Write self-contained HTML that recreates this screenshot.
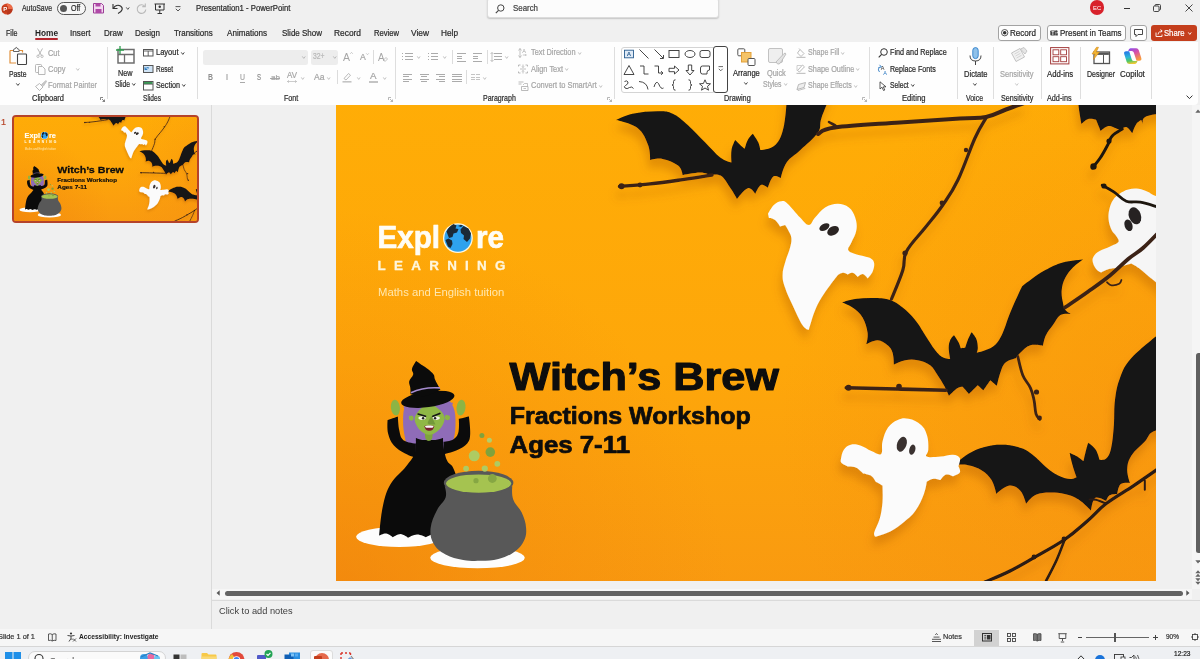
<!DOCTYPE html>
<html><head><meta charset="utf-8"><title>Presentation1 - PowerPoint</title>
<style>
*{box-sizing:border-box;margin:0;padding:0}
html,body{width:1200px;height:659px;overflow:hidden;background:#f0f0f0;font-family:"Liberation Sans",sans-serif;color:#262626}
#app{will-change:transform;position:relative;width:1200px;height:659px;overflow:hidden;background:#f0f0f0}
.abs{position:absolute}
.t{position:absolute;white-space:nowrap;font-size:8.6px;line-height:10px;color:#2b2b2b;-webkit-text-stroke:0.22px currentColor}
.g{color:#a8a8a8}
#ribbon{position:absolute;left:0;top:42px;width:1198px;height:62.8px;background:#fefefe;border-radius:0 0 4px 0}
.sep{position:absolute;top:47px;width:1px;height:52px;background:#dcdcdc}
.lbl{position:absolute;top:94px;font-size:8.4px;line-height:10px;color:#333;white-space:nowrap}
svg{position:absolute;overflow:visible}
.tab{position:absolute;top:28px;font-size:9.4px;line-height:11px;color:#2b2b2b;white-space:nowrap}
.btn{position:absolute;top:25px;height:16px;border:1px solid #8a8a8a;border-radius:3px;background:#fff}
</style></head><body><div id="app">

<!-- ============ TITLE BAR ============ -->
<div id="titlebar" class="abs" style="left:0;top:0;width:1200px;height:22px;background:#f0f0f0"></div>
<svg style="left:0.5px;top:2.5px" width="12" height="12" viewBox="0 0 12 12"><circle cx="6" cy="6" r="5.6" fill="#d24625"/><path d="M6 0.4A5.6 5.6 0 0 1 11.6 6L6 6Z" fill="#ed6c47"/><path d="M6 11.600A5.6 5.6 0 0 0 11.6 6L6 6Z" fill="#b7371c"/><rect x="1" y="3" width="6" height="6.4" rx="1" fill="#c13b1b"/><text x="2.300" y="8.300" font-family="Liberation Sans, sans-serif" font-size="6" font-weight="bold" fill="#fff">P</text></svg>
<div class="abs" style="left:57.0px;top:2.0px;width:28.5px;height:12.8px;border:1px solid #555;border-radius:7px;background:#f6f6f6"></div>
<div class="abs" style="left:60.2px;top:4.9px;width:7.0px;height:7.0px;border-radius:50%;background:#555"></div>
<svg style="left:93.0px;top:3.0px" width="11" height="10.5" viewBox="0 0 11 10.5"><path d="M0.5 0.5h8l2 2v7.500h-10z" fill="#f3d8f0" stroke="#9c3f97" stroke-width="1"/><rect x="2.500" y="0.500" width="5" height="3" fill="#b04aa8"/><rect x="2.500" y="6" width="6" height="4" fill="#b04aa8"/></svg>
<svg style="left:111.5px;top:3.0px" width="12" height="11" viewBox="0 0 12 11"><path d="M1 1v4.500h4.500" fill="none" stroke="#333" stroke-width="1.1"/><path d="M1.300 5.200C3 2.500 6 1.500 8.500 3C11.500 5 10.500 8.500 6 10.500" fill="none" stroke="#333" stroke-width="1.1"/></svg>
<svg style="left:125.5px;top:6.8px" width="3.6" height="3" viewBox="0 0 3.6 3"><path d="M0.3 0.4L1.8 2.4L3.3 0.4" fill="none" stroke="#444" stroke-width="0.9"/></svg>
<svg style="left:135.5px;top:2.5px" width="11" height="12" viewBox="0 0 11 12"><path d="M8.800 3.300A4.300 4.300 0 1 0 9.800 6.500" fill="none" stroke="#b9b9b9" stroke-width="1.100"/><path d="M6.300 3.600H9.300V0.600" fill="none" stroke="#b9b9b9" stroke-width="1.100"/></svg>
<svg style="left:154.0px;top:2.5px" width="11.5" height="12" viewBox="0 0 11.5 12"><path d="M0.500 1h10.500M1.500 1v6h8.500v-6M5.750 7v3M3.500 10.500h4.500" fill="none" stroke="#333" stroke-width="1"/><circle cx="5.750" cy="3.800" r="1.200" fill="#333"/></svg>
<svg style="left:175.0px;top:5.5px" width="6" height="6" viewBox="0 0 6 6"><path d="M0.500 0.600h5" stroke="#444" stroke-width="0.9"/><path d="M0.800 2.800L3 5L5.200 2.800" fill="none" stroke="#444" stroke-width="0.9"/></svg>
<div class="abs" style="left:487.0px;top:-2.0px;width:231.5px;height:19.5px;background:#fcfcfc;border:1px solid #dcdcdc;border-radius:3px;box-shadow:0 0.5px 1.5px rgba(0,0,0,.18)"></div>
<svg style="left:495.0px;top:3.5px" width="10" height="10" viewBox="0 0 10 10"><circle cx="5.800" cy="4" r="3.200" fill="none" stroke="#444" stroke-width="1"/><path d="M3.500 6.300L0.800 9.200" stroke="#444" stroke-width="1.100"/></svg>
<div class="abs" style="left:1089.5px;top:0.3px;width:14.5px;height:14.5px;border-radius:50%;background:#d8222b"></div>
<div class="abs" style="left:1123.5px;top:7.8px;width:6.5px;height:1.0px;background:#333"></div>
<svg style="left:1153.0px;top:4.0px" width="8" height="8" viewBox="0 0 8 8"><rect x="0.500" y="2" width="5.500" height="5.500" rx="1" fill="none" stroke="#333" stroke-width="0.9"/><path d="M2 2V1.500Q2 0.500 3 0.500H6.500Q7.500 0.500 7.500 1.500V5Q7.500 6 6.500 6H6" fill="none" stroke="#333" stroke-width="0.9"/></svg>
<svg style="left:1185.0px;top:4.0px" width="8" height="8" viewBox="0 0 8 8"><path d="M0.500 0.500L7.500 7.500M7.500 0.500L0.500 7.500" stroke="#333" stroke-width="0.9"/></svg>
<div class="t" style="left:22.0px;top:3.2px;font-size:8.3px;line-height:10.0px;color:#2b2b2b;font-weight:normal;transform-origin:0 50%;transform:scaleX(0.834)">AutoSave</div>
<div class="t" style="left:71.3px;top:3.2px;font-size:8.3px;line-height:10.0px;color:#2b2b2b;font-weight:normal;transform-origin:0 50%;transform:scaleX(0.842)">Off</div>
<div class="t" style="left:196.3px;top:3.2px;font-size:8.3px;line-height:10.0px;color:#2b2b2b;font-weight:normal;transform-origin:0 50%;transform:scaleX(0.935)">Presentation1  -  PowerPoint</div>
<div class="t" style="left:512.5px;top:3.0px;font-size:8.3px;line-height:10.0px;color:#444;font-weight:normal;transform-origin:0 50%;transform:scaleX(0.951)">Search</div>
<div class="t" style="left:1092.6px;top:3.8px;font-size:6.2px;line-height:7.4px;color:#fff;font-weight:normal;transform-origin:0 50%;transform:scaleX(0.952);-webkit-text-stroke:0">EC</div>

<!-- ============ TABS ============ -->
<div class="abs" style="left:35.0px;top:38.3px;width:22.5px;height:2.0px;background:#b3262e;border-radius:1px"></div>
<div class="abs" style="left:997.5px;top:25.0px;width:43.0px;height:15.5px;border:1px solid #a3a3a3;border-radius:3px;background:#fefefe"></div>
<svg style="left:1000.5px;top:29.3px" width="7.4" height="7.4" viewBox="0 0 7.4 7.4"><circle cx="3.700" cy="3.700" r="3.200" fill="none" stroke="#333" stroke-width="0.8"/><circle cx="3.700" cy="3.700" r="1.800" fill="#333"/></svg>
<div class="abs" style="left:1046.5px;top:25.0px;width:79.0px;height:15.5px;border:1px solid #a3a3a3;border-radius:3px;background:#fefefe"></div>
<svg style="left:1049.5px;top:29.0px" width="8" height="8" viewBox="0 0 8 8"><rect x="0.300" y="1.500" width="5" height="5" rx="0.800" fill="#444"/><circle cx="6.300" cy="2.500" r="1.300" fill="#444"/><path d="M5.300 4.200h2.500v2.300h-2.500z" fill="#444"/><text x="1.500" y="5.700" font-size="4.500" font-family="Liberation Sans, sans-serif" font-weight="bold" fill="#fff">T</text></svg>
<div class="abs" style="left:1130.0px;top:25.0px;width:16.5px;height:15.5px;border:1px solid #a3a3a3;border-radius:3px;background:#fefefe"></div>
<svg style="left:1134.0px;top:29.0px" width="9" height="8" viewBox="0 0 9 8"><path d="M0.500 0.500h8v5h-4.500l-2 2v-2h-1.500z" fill="none" stroke="#333" stroke-width="0.900" stroke-linejoin="round"/></svg>
<div class="abs" style="left:1151.0px;top:25.0px;width:45.5px;height:15.5px;border-radius:3px;background:#c43e1c"></div>
<svg style="left:1155.0px;top:28.5px" width="8" height="8" viewBox="0 0 8 8"><path d="M1 3.500v4h6v-2" fill="none" stroke="#fff" stroke-width="0.900"/><path d="M3 5.500C3.500 3 5 2 7 2M5.500 0.500L7.200 2L5.500 3.600" fill="none" stroke="#fff" stroke-width="0.900"/></svg>
<svg style="left:1188.2px;top:31.7px" width="3.6" height="3" viewBox="0 0 3.6 3"><path d="M0.3 0.4L1.8 2.4L3.3 0.4" fill="none" stroke="#fff" stroke-width="0.9"/></svg>
<div class="t" style="left:5.5px;top:27.6px;font-size:8.6px;line-height:10.3px;color:#2b2b2b;font-weight:normal;transform-origin:0 50%;transform:scaleX(0.830)">File</div>
<div class="t" style="left:34.5px;top:27.6px;font-size:8.6px;line-height:10.3px;color:#1e1e1e;font-weight:bold;transform-origin:0 50%;transform:scaleX(0.963);-webkit-text-stroke:0">Home</div>
<div class="t" style="left:69.5px;top:27.6px;font-size:8.6px;line-height:10.3px;color:#2b2b2b;font-weight:normal;transform-origin:0 50%;transform:scaleX(0.953)">Insert</div>
<div class="t" style="left:103.8px;top:27.6px;font-size:8.6px;line-height:10.3px;color:#2b2b2b;font-weight:normal;transform-origin:0 50%;transform:scaleX(0.932)">Draw</div>
<div class="t" style="left:135.0px;top:27.6px;font-size:8.6px;line-height:10.3px;color:#2b2b2b;font-weight:normal;transform-origin:0 50%;transform:scaleX(0.934)">Design</div>
<div class="t" style="left:173.8px;top:27.6px;font-size:8.6px;line-height:10.3px;color:#2b2b2b;font-weight:normal;transform-origin:0 50%;transform:scaleX(0.928)">Transitions</div>
<div class="t" style="left:227.0px;top:27.6px;font-size:8.6px;line-height:10.3px;color:#2b2b2b;font-weight:normal;transform-origin:0 50%;transform:scaleX(0.941)">Animations</div>
<div class="t" style="left:281.5px;top:27.6px;font-size:8.6px;line-height:10.3px;color:#2b2b2b;font-weight:normal;transform-origin:0 50%;transform:scaleX(0.930)">Slide Show</div>
<div class="t" style="left:334.0px;top:27.6px;font-size:8.6px;line-height:10.3px;color:#2b2b2b;font-weight:normal;transform-origin:0 50%;transform:scaleX(0.975)">Record</div>
<div class="t" style="left:374.0px;top:27.6px;font-size:8.6px;line-height:10.3px;color:#2b2b2b;font-weight:normal;transform-origin:0 50%;transform:scaleX(0.887)">Review</div>
<div class="t" style="left:411.0px;top:27.6px;font-size:8.6px;line-height:10.3px;color:#2b2b2b;font-weight:normal;transform-origin:0 50%;transform:scaleX(0.974)">View</div>
<div class="t" style="left:441.0px;top:27.6px;font-size:8.6px;line-height:10.3px;color:#2b2b2b;font-weight:normal;transform-origin:0 50%;transform:scaleX(0.961)">Help</div>
<div class="t" style="left:1010.0px;top:27.7px;font-size:8.4px;line-height:10.1px;color:#2b2b2b;font-weight:normal;transform-origin:0 50%;transform:scaleX(0.963)">Record</div>
<div class="t" style="left:1059.5px;top:27.7px;font-size:8.4px;line-height:10.1px;color:#2b2b2b;font-weight:normal;transform-origin:0 50%;transform:scaleX(0.953)">Present in Teams</div>
<div class="t" style="left:1163.5px;top:27.7px;font-size:8.4px;line-height:10.1px;color:#fff;font-weight:normal;transform-origin:0 50%;transform:scaleX(0.917)">Share</div>

<!-- ============ RIBBON ============ -->
<div id="ribbon"></div>
<div class="abs" style="left:107.0px;top:47.0px;width:1.0px;height:52.0px;background:#dedede"></div>
<div class="abs" style="left:197.0px;top:47.0px;width:1.0px;height:52.0px;background:#dedede"></div>
<div class="abs" style="left:394.5px;top:47.0px;width:1.0px;height:52.0px;background:#dedede"></div>
<div class="abs" style="left:614.3px;top:47.0px;width:1.0px;height:52.0px;background:#dedede"></div>
<div class="abs" style="left:868.8px;top:47.0px;width:1.0px;height:52.0px;background:#dedede"></div>
<div class="abs" style="left:956.6px;top:47.0px;width:1.0px;height:52.0px;background:#dedede"></div>
<div class="abs" style="left:993.2px;top:47.0px;width:1.0px;height:52.0px;background:#dedede"></div>
<div class="abs" style="left:1040.5px;top:47.0px;width:1.0px;height:52.0px;background:#dedede"></div>
<div class="abs" style="left:1079.6px;top:47.0px;width:1.0px;height:52.0px;background:#dedede"></div>
<div class="abs" style="left:1151.0px;top:47.0px;width:1.0px;height:52.0px;background:#dedede"></div>
<svg style="left:9.0px;top:47.0px" width="19" height="18" viewBox="0 0 19 18"><path d="M1 3.500h3.500M10 3.500h3.500v2" fill="none" stroke="#e0903c" stroke-width="1.200"/><path d="M1 3.500v12.500h6" fill="none" stroke="#e0903c" stroke-width="1.200"/><path d="M4.500 4.500v-1.500q0-1 1-1h0.500q0.500-1.600 1.300-1.600q0.800 0 1.300 1.600h0.500q1 0 1 1v1.500z" fill="#fff" stroke="#555" stroke-width="0.900"/><rect x="8.500" y="7" width="9" height="10.500" rx="0.800" fill="#fff" stroke="#444" stroke-width="1.100"/></svg>
<svg style="left:15.6px;top:83.0px" width="3.8" height="3" viewBox="0 0 3.8 3"><path d="M0.3 0.4L1.9 2.4L3.5 0.4" fill="none" stroke="#333" stroke-width="0.9"/></svg>
<svg style="left:36.0px;top:47.5px" width="8" height="10" viewBox="0 0 8 10"><path d="M1.500 0.500L5.500 7.500M6.500 0.500L2.500 7.500" stroke="#b0b0b0" stroke-width="0.900"/><circle cx="2" cy="8.300" r="1.200" fill="none" stroke="#b0b0b0" stroke-width="0.800"/><circle cx="6" cy="8.300" r="1.200" fill="none" stroke="#b0b0b0" stroke-width="0.800"/></svg>
<svg style="left:34.5px;top:63.5px" width="11" height="11" viewBox="0 0 11 11"><rect x="0.500" y="0.500" width="6" height="8" rx="0.800" fill="none" stroke="#b0b0b0" stroke-width="0.900"/><path d="M3.500 2.500h4l2.500 2.500v5.500h-6.500z" fill="#fdfdfd" stroke="#b0b0b0" stroke-width="0.900"/></svg>
<svg style="left:76.2px;top:68.0px" width="3.6" height="3" viewBox="0 0 3.6 3"><path d="M0.3 0.4L1.8 2.4L3.3 0.4" fill="none" stroke="#bbb" stroke-width="0.9"/></svg>
<svg style="left:34.5px;top:80.0px" width="12" height="11" viewBox="0 0 12 11"><path d="M6.500 4.500L10.500 0.800Q11.500 0.300 11.500 1.500L8.500 6z" fill="#c9c9c9" stroke="#b0b0b0" stroke-width="0.600"/><path d="M0.500 6.500L4.500 3.500L8 7L4.500 10.500z" fill="none" stroke="#b0b0b0" stroke-width="0.900"/></svg>
<svg style="left:99.5px;top:96.5px" width="5" height="5" viewBox="0 0 5 5"><path d="M0.500 3v-2.500h2.500M2 2L4.500 4.500M4.500 2.500v2h-2" fill="none" stroke="#555" stroke-width="0.700"/></svg>
<svg style="left:116.0px;top:46.0px" width="19" height="19" viewBox="0 0 19 19"><rect x="2" y="3.500" width="16" height="13.500" fill="#fff" stroke="#6d6d6d" stroke-width="1.500"/><path d="M2 8.500h16M8.500 8.500v8.500" stroke="#6d6d6d" stroke-width="1.300"/><path d="M4 0v8M0 4h8" stroke="#2f9e4f" stroke-width="1.300"/></svg>
<svg style="left:132.0px;top:82.7px" width="3.6" height="3" viewBox="0 0 3.6 3"><path d="M0.3 0.4L1.8 2.4L3.3 0.4" fill="none" stroke="#333" stroke-width="0.9"/></svg>
<svg style="left:142.5px;top:48.5px" width="10.5" height="7.5" viewBox="0 0 10.5 7.5"><rect x="0.500" y="0.500" width="9.500" height="6.500" fill="#fff" stroke="#555" stroke-width="1"/><path d="M0.500 2h9.500M5.200 2v5" stroke="#555" stroke-width="0.900"/></svg>
<svg style="left:180.7px;top:51.5px" width="3.6" height="3" viewBox="0 0 3.6 3"><path d="M0.3 0.4L1.8 2.4L3.3 0.4" fill="none" stroke="#333" stroke-width="0.9"/></svg>
<svg style="left:142.5px;top:64.5px" width="10.5" height="8" viewBox="0 0 10.5 8"><rect x="0.500" y="0.500" width="9.500" height="7" fill="#cfe3f5" stroke="#555" stroke-width="1"/><path d="M2 4.500Q3.500 1.500 6 3M2 2.200v2.300h2.300" fill="none" stroke="#1e70b8" stroke-width="0.900"/></svg>
<svg style="left:142.5px;top:80.5px" width="10.5" height="9.5" viewBox="0 0 10.5 9.5"><rect x="0.500" y="0.500" width="9.500" height="8.500" fill="#fff" stroke="#555" stroke-width="1"/><rect x="1" y="1" width="8.500" height="2" fill="#3a9a56"/><path d="M0.500 3.200h9.500" stroke="#555" stroke-width="0.800"/></svg>
<svg style="left:182.2px;top:84.1px" width="3.6" height="3" viewBox="0 0 3.6 3"><path d="M0.3 0.4L1.8 2.4L3.3 0.4" fill="none" stroke="#333" stroke-width="0.9"/></svg>
<div class="abs" style="left:202.5px;top:49.5px;width:105.0px;height:15.0px;background:#ededed;border-radius:2.500px"></div>
<svg style="left:302.2px;top:56.0px" width="3.6" height="3" viewBox="0 0 3.6 3"><path d="M0.3 0.4L1.8 2.4L3.3 0.4" fill="none" stroke="#b5b5b5" stroke-width="0.9"/></svg>
<div class="abs" style="left:310.5px;top:49.5px;width:27.5px;height:15.0px;background:#ededed;border-radius:2.500px"></div>
<svg style="left:332.7px;top:56.0px" width="3.6" height="3" viewBox="0 0 3.6 3"><path d="M0.3 0.4L1.8 2.4L3.3 0.4" fill="none" stroke="#b5b5b5" stroke-width="0.9"/></svg>
<svg style="left:350.0px;top:51.5px" width="3" height="2" viewBox="0 0 3 2"><path d="M0.200 1.800L1.500 0.400L2.800 1.800" fill="none" stroke="#aaa" stroke-width="0.600"/></svg>
<svg style="left:366.0px;top:52.5px" width="3" height="2" viewBox="0 0 3 2"><path d="M0.200 0.300L1.500 1.700L2.800 0.300" fill="none" stroke="#aaa" stroke-width="0.600"/></svg>
<div class="abs" style="left:373.0px;top:50.0px;width:1.0px;height:14.0px;background:#dcdcdc"></div>
<svg style="left:383.0px;top:57.0px" width="5" height="5" viewBox="0 0 5 5"><path d="M0.500 3L3 0.500L4.500 2L2 4.500z" fill="none" stroke="#aaa" stroke-width="0.700"/></svg>
<div class="abs" style="left:240.0px;top:82.2px;width:5.0px;height:0.7px;background:#aaa"></div>
<div class="abs" style="left:270.0px;top:77.8px;width:10.0px;height:0.7px;background:#aaa"></div>
<svg style="left:287.0px;top:79.5px" width="10" height="3" viewBox="0 0 10 3"><path d="M0.500 1.500h9M2 0.300L0.500 1.500L2 2.700M8 0.300L9.500 1.500L8 2.700" fill="none" stroke="#aaa" stroke-width="0.600"/></svg>
<svg style="left:300.8px;top:76.5px" width="3.4" height="3" viewBox="0 0 3.4 3"><path d="M0.3 0.4L1.7 2.4L3.1 0.4" fill="none" stroke="#bbb" stroke-width="0.9"/></svg>
<svg style="left:327.1px;top:76.5px" width="3.4" height="3" viewBox="0 0 3.4 3"><path d="M0.3 0.4L1.7 2.4L3.1 0.4" fill="none" stroke="#bbb" stroke-width="0.9"/></svg>
<div class="abs" style="left:337.0px;top:70.0px;width:1.0px;height:14.0px;background:#dcdcdc"></div>
<svg style="left:342.0px;top:72.0px" width="10" height="11" viewBox="0 0 10 11"><path d="M2 6.500L6.500 1.500L8.500 3.200L4 8z" fill="none" stroke="#aaa" stroke-width="0.800"/><rect x="0.500" y="9" width="9" height="1.600" fill="#c4c4c4"/></svg>
<svg style="left:357.1px;top:76.5px" width="3.4" height="3" viewBox="0 0 3.4 3"><path d="M0.3 0.4L1.7 2.4L3.1 0.4" fill="none" stroke="#bbb" stroke-width="0.9"/></svg>
<div class="abs" style="left:368.5px;top:81.3px;width:9.5px;height:1.6px;background:#c4c4c4"></div>
<svg style="left:382.8px;top:76.5px" width="3.4" height="3" viewBox="0 0 3.4 3"><path d="M0.3 0.4L1.7 2.4L3.1 0.4" fill="none" stroke="#bbb" stroke-width="0.9"/></svg>
<svg style="left:387.5px;top:96.5px" width="5" height="5" viewBox="0 0 5 5"><path d="M0.500 3v-2.500h2.500M2 2L4.500 4.500M4.500 2.500v2h-2" fill="none" stroke="#999" stroke-width="0.700"/></svg>
<div class="abs" style="left:405.0px;top:53.3px;width:7.5px;height:0.8px;background:#ababab"></div><div class="abs" style="left:402.2px;top:53.1px;width:1.200px;height:1.200px;background:#ababab"></div><div class="abs" style="left:405.0px;top:56.3px;width:7.5px;height:0.8px;background:#ababab"></div><div class="abs" style="left:402.2px;top:56.1px;width:1.200px;height:1.200px;background:#ababab"></div><div class="abs" style="left:405.0px;top:59.3px;width:7.5px;height:0.8px;background:#ababab"></div><div class="abs" style="left:402.2px;top:59.1px;width:1.200px;height:1.200px;background:#ababab"></div>
<svg style="left:417.1px;top:56.0px" width="3.4" height="3" viewBox="0 0 3.4 3"><path d="M0.3 0.4L1.7 2.4L3.1 0.4" fill="none" stroke="#bbb" stroke-width="0.9"/></svg>
<div class="abs" style="left:430.5px;top:53.3px;width:7.5px;height:0.8px;background:#ababab"></div><div class="abs" style="left:427.7px;top:53.1px;width:1.200px;height:1.200px;background:#ababab"></div><div class="abs" style="left:430.5px;top:56.3px;width:7.5px;height:0.8px;background:#ababab"></div><div class="abs" style="left:427.7px;top:56.1px;width:1.200px;height:1.200px;background:#ababab"></div><div class="abs" style="left:430.5px;top:59.3px;width:7.5px;height:0.8px;background:#ababab"></div><div class="abs" style="left:427.7px;top:59.1px;width:1.200px;height:1.200px;background:#ababab"></div>
<svg style="left:443.3px;top:56.0px" width="3.4" height="3" viewBox="0 0 3.4 3"><path d="M0.3 0.4L1.7 2.4L3.1 0.4" fill="none" stroke="#bbb" stroke-width="0.9"/></svg>
<div class="abs" style="left:451.8px;top:50.0px;width:1.0px;height:14.0px;background:#dcdcdc"></div>
<div class="abs" style="left:457.0px;top:53.0px;width:8.5px;height:0.8px;background:#ababab"></div><div class="abs" style="left:457.0px;top:55.6px;width:5.0px;height:0.8px;background:#ababab"></div><div class="abs" style="left:457.0px;top:58.2px;width:5.0px;height:0.8px;background:#ababab"></div><div class="abs" style="left:457.0px;top:60.8px;width:8.5px;height:0.8px;background:#ababab"></div>
<div class="abs" style="left:473.0px;top:53.0px;width:9.0px;height:0.8px;background:#ababab"></div><div class="abs" style="left:473.0px;top:55.6px;width:5.0px;height:0.8px;background:#ababab"></div><div class="abs" style="left:473.0px;top:58.2px;width:5.0px;height:0.8px;background:#ababab"></div><div class="abs" style="left:473.0px;top:60.8px;width:9.0px;height:0.8px;background:#ababab"></div>
<div class="abs" style="left:486.8px;top:50.0px;width:1.0px;height:14.0px;background:#dcdcdc"></div>
<div class="abs" style="left:494.0px;top:53.0px;width:7.5px;height:0.8px;background:#ababab"></div><div class="abs" style="left:494.0px;top:56.0px;width:7.5px;height:0.8px;background:#ababab"></div><div class="abs" style="left:494.0px;top:59.0px;width:7.5px;height:0.8px;background:#ababab"></div>
<svg style="left:489.5px;top:52.0px" width="4" height="10" viewBox="0 0 4 10"><path d="M2 0.500v9M0.500 2L2 0.500L3.500 2M0.500 8L2 9.500L3.500 8" fill="none" stroke="#aaa" stroke-width="0.700"/></svg>
<svg style="left:504.6px;top:56.0px" width="3.4" height="3" viewBox="0 0 3.4 3"><path d="M0.3 0.4L1.7 2.4L3.1 0.4" fill="none" stroke="#bbb" stroke-width="0.9"/></svg>
<div class="abs" style="left:403.0px;top:73.5px;width:9.0px;height:0.8px;background:#ababab"></div><div class="abs" style="left:403.0px;top:76.1px;width:6.0px;height:0.8px;background:#ababab"></div><div class="abs" style="left:403.0px;top:78.7px;width:9.0px;height:0.8px;background:#ababab"></div><div class="abs" style="left:403.0px;top:81.3px;width:6.0px;height:0.8px;background:#ababab"></div>
<div class="abs" style="left:419.5px;top:73.5px;width:9.0px;height:0.8px;background:#ababab"></div><div class="abs" style="left:421.2px;top:76.1px;width:5.5px;height:0.8px;background:#ababab"></div><div class="abs" style="left:419.5px;top:78.7px;width:9.0px;height:0.8px;background:#ababab"></div><div class="abs" style="left:421.2px;top:81.3px;width:5.5px;height:0.8px;background:#ababab"></div>
<div class="abs" style="left:435.8px;top:73.5px;width:9.0px;height:0.8px;background:#ababab"></div><div class="abs" style="left:438.8px;top:76.1px;width:6.0px;height:0.8px;background:#ababab"></div><div class="abs" style="left:435.8px;top:78.7px;width:9.0px;height:0.8px;background:#ababab"></div><div class="abs" style="left:438.8px;top:81.3px;width:6.0px;height:0.8px;background:#ababab"></div>
<div class="abs" style="left:452.0px;top:73.5px;width:9.5px;height:0.8px;background:#ababab"></div><div class="abs" style="left:452.0px;top:76.1px;width:9.5px;height:0.8px;background:#ababab"></div><div class="abs" style="left:452.0px;top:78.7px;width:9.5px;height:0.8px;background:#ababab"></div><div class="abs" style="left:452.0px;top:81.3px;width:9.5px;height:0.8px;background:#ababab"></div>
<div class="abs" style="left:465.8px;top:70.0px;width:1.0px;height:14.0px;background:#dcdcdc"></div>
<div class="abs" style="left:471.3px;top:74.0px;width:3.5px;height:0.8px;background:#c4c4c4"></div><div class="abs" style="left:471.3px;top:76.6px;width:3.5px;height:0.8px;background:#c4c4c4"></div><div class="abs" style="left:471.3px;top:79.2px;width:3.5px;height:0.8px;background:#c4c4c4"></div>
<div class="abs" style="left:476.0px;top:74.0px;width:3.5px;height:0.8px;background:#c4c4c4"></div><div class="abs" style="left:476.0px;top:76.6px;width:3.5px;height:0.8px;background:#c4c4c4"></div><div class="abs" style="left:476.0px;top:79.2px;width:3.5px;height:0.8px;background:#c4c4c4"></div>
<svg style="left:483.3px;top:76.5px" width="3.4" height="3" viewBox="0 0 3.4 3"><path d="M0.3 0.4L1.7 2.4L3.1 0.4" fill="none" stroke="#bbb" stroke-width="0.9"/></svg>
<svg style="left:518.0px;top:47.5px" width="9" height="10" viewBox="0 0 9 10"><path d="M2 0.500v9M0.500 7.500L2 9.500L3.500 7.500M0.500 2.500L2 0.500L3.500 2.500" fill="none" stroke="#aaa" stroke-width="0.700"/><text x="4.300" y="5" font-size="5.500" font-family="Liberation Sans, sans-serif" fill="#aaa">A</text><path d="M4.800 7h3.500l-1-1M8.300 7l-1 1" fill="none" stroke="#aaa" stroke-width="0.600"/></svg>
<svg style="left:577.8px;top:51.5px" width="3.4" height="3" viewBox="0 0 3.4 3"><path d="M0.3 0.4L1.7 2.4L3.1 0.4" fill="none" stroke="#bbb" stroke-width="0.9"/></svg>
<svg style="left:517.5px;top:64.0px" width="10" height="10" viewBox="0 0 10 10"><path d="M0.500 2.500v-1.500h2M9.500 2.500v-1.500h-2M0.500 7.500v1.500h2M9.500 7.500v1.500h-2" fill="none" stroke="#aaa" stroke-width="0.800"/><path d="M2 5h6M5 0.500v3M5 6.500v3M4 2.500L5 3.500L6 2.500M4 7.500L5 6.500L6 7.500" fill="none" stroke="#aaa" stroke-width="0.700"/></svg>
<svg style="left:565.3px;top:68.0px" width="3.4" height="3" viewBox="0 0 3.4 3"><path d="M0.3 0.4L1.7 2.4L3.1 0.4" fill="none" stroke="#bbb" stroke-width="0.9"/></svg>
<svg style="left:517.5px;top:80.5px" width="10.5" height="10" viewBox="0 0 10.5 10"><path d="M0.500 1h5M0.500 3h3" stroke="#aaa" stroke-width="0.800"/><path d="M3.500 5.500h6.500v4h-6.500z" fill="none" stroke="#aaa" stroke-width="0.800"/><path d="M5 4l1.500-1.500h3v3" fill="none" stroke="#aaa" stroke-width="0.700"/><path d="M5.500 7.500h2.500" stroke="#aaa" stroke-width="0.700"/></svg>
<svg style="left:599.3px;top:84.5px" width="3.4" height="3" viewBox="0 0 3.4 3"><path d="M0.3 0.4L1.7 2.4L3.1 0.4" fill="none" stroke="#bbb" stroke-width="0.9"/></svg>
<svg style="left:607.0px;top:96.5px" width="5" height="5" viewBox="0 0 5 5"><path d="M0.500 3v-2.500h2.500M2 2L4.500 4.500M4.500 2.500v2h-2" fill="none" stroke="#999" stroke-width="0.700"/></svg>
<div class="abs" style="left:620.5px;top:47.0px;width:93.0px;height:45.5px;border:1px solid #d4d4d4;border-radius:3px 0 0 3px;background:#fff"></div>
<div class="abs" style="left:713.0px;top:45.5px;width:14.5px;height:47.5px;border:1px solid #444;border-radius:3px;background:#fff"></div>
<svg style="left:717.5px;top:65.5px" width="5.5" height="6" viewBox="0 0 5.5 6"><path d="M0.500 0.600h4.500" stroke="#444" stroke-width="0.800"/><path d="M0.800 2.800L2.750 4.800L4.700 2.800" fill="none" stroke="#444" stroke-width="0.800"/></svg>
<svg style="left:622.8px;top:47.8px" width="12" height="12" viewBox="0 0 12 12"><rect x="1.500" y="2.200" width="9" height="7.600" fill="#dfeaf6" stroke="#2a5d8f" stroke-width="0.900"/><text x="3.800" y="8.300" font-size="6" font-weight="bold" font-family="Liberation Sans, sans-serif" fill="#2a5d8f">A</text></svg>
<svg style="left:637.8px;top:47.8px" width="12" height="12" viewBox="0 0 12 12"><path d="M1.500 1.500L10.500 10.500" fill="none" stroke="#333" stroke-width="0.9"/></svg>
<svg style="left:653.3px;top:47.8px" width="12" height="12" viewBox="0 0 12 12"><path d="M1.500 1.500L10 10M10.500 7v3.500h-3.500" fill="none" stroke="#333" stroke-width="0.9"/></svg>
<svg style="left:668.3px;top:47.8px" width="12" height="12" viewBox="0 0 12 12"><rect x="1" y="2.500" width="10" height="7" fill="none" stroke="#333" stroke-width="0.9"/></svg>
<svg style="left:683.5px;top:47.8px" width="12" height="12" viewBox="0 0 12 12"><ellipse cx="6" cy="6" rx="5" ry="3.500" fill="none" stroke="#333" stroke-width="0.9"/></svg>
<svg style="left:698.5px;top:47.8px" width="12" height="12" viewBox="0 0 12 12"><rect x="1" y="2.500" width="10" height="7" rx="2" fill="none" stroke="#333" stroke-width="0.9"/></svg>
<svg style="left:622.8px;top:63.5px" width="12" height="12" viewBox="0 0 12 12"><path d="M6 1.500L11 10.500H1z" fill="none" stroke="#333" stroke-width="0.9" stroke-linejoin="round"/></svg>
<svg style="left:637.8px;top:63.5px" width="12" height="12" viewBox="0 0 12 12"><path d="M2 2h4v8h4.500" fill="none" stroke="#333" stroke-width="0.9"/></svg>
<svg style="left:653.3px;top:63.5px" width="12" height="12" viewBox="0 0 12 12"><path d="M1.500 2h4v7h4M8 7.200L10 9L8 10.800" fill="none" stroke="#333" stroke-width="0.9"/></svg>
<svg style="left:668.3px;top:63.5px" width="12" height="12" viewBox="0 0 12 12"><path d="M1 4.300h5.500v-2.300L11 6L6.500 10v-2.300H1z" fill="none" stroke="#333" stroke-width="0.9" stroke-linejoin="round"/></svg>
<svg style="left:683.5px;top:63.5px" width="12" height="12" viewBox="0 0 12 12"><path d="M4.300 1h3.400v5.500h2.300L6 11L2 6.500h2.300z" fill="none" stroke="#333" stroke-width="0.9" stroke-linejoin="round"/></svg>
<svg style="left:698.5px;top:63.5px" width="12" height="12" viewBox="0 0 12 12"><path d="M1.500 4Q1.500 2 3.500 2H10.500V6Q8 6 8 8.500V10H3.500Q1.500 10 1.500 8z" fill="none" stroke="#333" stroke-width="0.9" stroke-linejoin="round"/></svg>
<svg style="left:622.8px;top:78.5px" width="12" height="12" viewBox="0 0 12 12"><path d="M1.500 2.500Q4 1 5 3Q5.500 5 2.500 6.500Q0.500 7.500 2 9Q4 10.500 6.500 8.500Q9 7 10.500 9.500" fill="none" stroke="#333" stroke-width="0.9"/></svg>
<svg style="left:637.8px;top:78.5px" width="12" height="12" viewBox="0 0 12 12"><path d="M1 2.500Q9 3 10 10.500" fill="none" stroke="#333" stroke-width="0.9"/></svg>
<svg style="left:653.3px;top:78.5px" width="12" height="12" viewBox="0 0 12 12"><path d="M1 8Q3 1 5.500 4.500Q8 11 10.500 9" fill="none" stroke="#333" stroke-width="0.9"/></svg>
<svg style="left:668.3px;top:78.5px" width="12" height="12" viewBox="0 0 12 12"><path d="M7.500 0.800Q5.500 0.800 5.500 2.500V4.500Q5.500 6 4 6Q5.500 6 5.500 7.500V9.500Q5.500 11.200 7.500 11.200" fill="none" stroke="#333" stroke-width="0.9"/></svg>
<svg style="left:683.5px;top:78.5px" width="12" height="12" viewBox="0 0 12 12"><path d="M4.500 0.800Q6.500 0.800 6.500 2.500V4.500Q6.500 6 8 6Q6.500 6 6.500 7.500V9.500Q6.500 11.200 4.500 11.200" fill="none" stroke="#333" stroke-width="0.9"/></svg>
<svg style="left:698.5px;top:78.5px" width="12" height="12" viewBox="0 0 12 12"><path d="M6 0.800L7.600 4.500L11.500 4.800L8.500 7.300L9.500 11.200L6 9L2.500 11.200L3.500 7.300L0.500 4.800L4.400 4.500z" fill="none" stroke="#333" stroke-width="0.9" stroke-linejoin="round"/></svg>
<svg style="left:737.0px;top:47.5px" width="19" height="18" viewBox="0 0 19 18"><rect x="0.800" y="0.800" width="7" height="7" rx="1" fill="#fff" stroke="#555" stroke-width="1"/><rect x="4.500" y="4.500" width="9.500" height="9.500" fill="#f5c469" stroke="#e3a13a" stroke-width="1"/><rect x="11" y="10.500" width="7" height="7" rx="1" fill="#fff" stroke="#555" stroke-width="1"/></svg>
<svg style="left:743.6px;top:81.8px" width="3.8" height="3" viewBox="0 0 3.8 3"><path d="M0.3 0.4L1.9 2.4L3.5 0.4" fill="none" stroke="#333" stroke-width="0.9"/></svg>
<svg style="left:767.5px;top:47.5px" width="19" height="18" viewBox="0 0 19 18"><rect x="0.500" y="0.500" width="14" height="14" rx="1.500" fill="#efefef" stroke="#c2c2c2" stroke-width="1"/><path d="M8 14L16 5.500Q17.500 4.500 18 6L12 15.500Q9.500 17.500 8 14z" fill="#e3e3e3" stroke="#b5b5b5" stroke-width="0.800"/></svg>
<svg style="left:784.3px;top:82.9px" width="3.4" height="3" viewBox="0 0 3.4 3"><path d="M0.3 0.4L1.7 2.4L3.1 0.4" fill="none" stroke="#bbb" stroke-width="0.9"/></svg>
<svg style="left:795.5px;top:47.5px" width="10" height="10" viewBox="0 0 10 10"><path d="M4 1.500L8 5.500L5 8.500L1.500 5z" fill="none" stroke="#aaa" stroke-width="0.800"/><path d="M4 1.500L3 0.500" stroke="#aaa" stroke-width="0.800"/><rect x="0.500" y="8.800" width="9" height="1.200" fill="#c4c4c4"/></svg>
<svg style="left:841.3px;top:51.5px" width="3.4" height="3" viewBox="0 0 3.4 3"><path d="M0.3 0.4L1.7 2.4L3.1 0.4" fill="none" stroke="#bbb" stroke-width="0.9"/></svg>
<svg style="left:795.5px;top:64.0px" width="10" height="10" viewBox="0 0 10 10"><path d="M1.500 6.500L6.500 1L8.500 2.800L3.500 8z" fill="none" stroke="#aaa" stroke-width="0.800"/><rect x="0.500" y="8.800" width="9" height="1.200" fill="#c4c4c4"/><path d="M1 1.500h4.500M1 1.500v5" stroke="#bbb" stroke-width="0.700" fill="none"/></svg>
<svg style="left:856.3px;top:68.0px" width="3.4" height="3" viewBox="0 0 3.4 3"><path d="M0.3 0.4L1.7 2.4L3.1 0.4" fill="none" stroke="#bbb" stroke-width="0.9"/></svg>
<svg style="left:795.5px;top:80.5px" width="10.5" height="10" viewBox="0 0 10.5 10"><path d="M2.500 3.500L9.500 1.500L8 6.500L1 8.500z" fill="#eee" stroke="#aaa" stroke-width="0.800"/><path d="M1 8.500L2 9.500L9 7.500L8 6.500" fill="none" stroke="#aaa" stroke-width="0.700"/></svg>
<svg style="left:854.1px;top:84.5px" width="3.4" height="3" viewBox="0 0 3.4 3"><path d="M0.3 0.4L1.7 2.4L3.1 0.4" fill="none" stroke="#bbb" stroke-width="0.9"/></svg>
<svg style="left:862.0px;top:96.5px" width="5" height="5" viewBox="0 0 5 5"><path d="M0.500 3v-2.500h2.500M2 2L4.500 4.500M4.500 2.500v2h-2" fill="none" stroke="#999" stroke-width="0.700"/></svg>
<svg style="left:877.5px;top:47.5px" width="10" height="10" viewBox="0 0 10 10"><circle cx="6" cy="4" r="3.300" fill="none" stroke="#333" stroke-width="1"/><path d="M3.600 6.400L0.700 9.400" stroke="#333" stroke-width="1.100"/></svg>
<svg style="left:877.0px;top:63.5px" width="11" height="11" viewBox="0 0 11 11"><path d="M2 3.500Q0.500 6 2.500 8M2.500 0.800L4.500 3L1.500 3.500" fill="none" stroke="#2b78c2" stroke-width="0.900"/><text x="3.800" y="6" font-size="5.500" font-family="Liberation Sans, sans-serif" fill="#333">A</text><text x="6.300" y="10.500" font-size="5.500" font-family="Liberation Sans, sans-serif" fill="#2b78c2">A</text></svg>
<svg style="left:878.5px;top:80.5px" width="8" height="10" viewBox="0 0 8 10"><path d="M1 0.800V8L3 6.200L4.500 9.500L5.800 9L4.300 5.800H7z" fill="#fff" stroke="#333" stroke-width="0.800" stroke-linejoin="round"/></svg>
<svg style="left:911.0px;top:84.3px" width="3.6" height="3" viewBox="0 0 3.6 3"><path d="M0.3 0.4L1.8 2.4L3.3 0.4" fill="none" stroke="#333" stroke-width="0.9"/></svg>
<svg style="left:968.5px;top:46.5px" width="13" height="19" viewBox="0 0 13 19"><rect x="3.800" y="0.600" width="5.400" height="11" rx="2.700" fill="#8fc1ea" stroke="#2f7fca" stroke-width="0.900"/><path d="M1 8.500Q1 14 6.500 14Q12 14 12 8.500M6.500 14v4" fill="none" stroke="#444" stroke-width="1"/></svg>
<svg style="left:973.1px;top:82.8px" width="3.8" height="3" viewBox="0 0 3.8 3"><path d="M0.3 0.4L1.9 2.4L3.5 0.4" fill="none" stroke="#333" stroke-width="0.9"/></svg>
<svg style="left:1009.5px;top:47.0px" width="18" height="18" viewBox="0 0 18 18"><path d="M1.500 6L10 1.500L14.500 10L6 14.500z" fill="#f1f1f1" stroke="#bdbdbd" stroke-width="0.900"/><path d="M4.500 7L9.500 4.300M5.500 9L10.500 6.300M6.500 11L11.500 8.300" stroke="#c9c9c9" stroke-width="0.700"/><path d="M10.500 2L14 0.500L17 4L15 7z" fill="#e6e6e6" stroke="#bdbdbd" stroke-width="0.800"/></svg>
<svg style="left:1014.8px;top:82.5px" width="3.6" height="3" viewBox="0 0 3.6 3"><path d="M0.3 0.4L1.8 2.4L3.3 0.4" fill="none" stroke="#c4c4c4" stroke-width="0.9"/></svg>
<svg style="left:1050.0px;top:47.3px" width="19.5" height="17.5" viewBox="0 0 19.5 17.5"><rect x="0.600" y="0.600" width="18.300" height="16.300" fill="#fff" stroke="#a33b3b" stroke-width="1"/><rect x="3" y="2.800" width="5.800" height="5" fill="none" stroke="#a33b3b" stroke-width="0.900"/><rect x="10.700" y="2.800" width="5.800" height="5" fill="none" stroke="#a33b3b" stroke-width="0.900"/><rect x="3" y="9.700" width="5.800" height="5" fill="none" stroke="#a33b3b" stroke-width="0.900"/><rect x="10.700" y="9.700" width="5.800" height="5" fill="none" stroke="#a33b3b" stroke-width="0.900"/></svg>
<svg style="left:1091.0px;top:46.5px" width="19.5" height="18.5" viewBox="0 0 19.5 18.5"><rect x="3" y="5" width="15.500" height="11.500" fill="#fff" stroke="#555" stroke-width="1.300"/><rect x="3.600" y="5.600" width="14.300" height="2.300" fill="#555"/><path d="M12.500 8v8" stroke="#555" stroke-width="1"/><path d="M5.500 0.300L1 7h3l-1.500 5.500L8.500 5h-3.300L7.500 0.300z" fill="#f2b431" stroke="#d48a1c" stroke-width="0.600" stroke-linejoin="round"/></svg>
<svg style="left:1123.0px;top:46.5px" width="19.5" height="18.5" viewBox="0 0 19.5 18.5"><defs><linearGradient id="cp1" x1="0" y1="0" x2="0.6" y2="1"><stop offset="0" stop-color="#7d4df5"/><stop offset="0.500" stop-color="#d84fa8"/><stop offset="1" stop-color="#f79a3e"/></linearGradient><linearGradient id="cp2" x1="0.300" y1="0" x2="0.500" y2="1"><stop offset="0" stop-color="#2576e8"/><stop offset="0.450" stop-color="#2bb6d8"/><stop offset="0.750" stop-color="#52c760"/><stop offset="1" stop-color="#f2c935"/></linearGradient></defs><path d="M7.500 1.200H13.200Q15.200 1.200 15.800 3.200L18.300 11Q19 13.800 16.300 13.800H13.500L10.800 5.500Q10.300 4 8.800 4H5.200Q5.800 1.400 7.500 1.200z" fill="url(#cp1)"/><path d="M12.200 17H6.300Q4.300 17 3.700 15L1.200 7Q0.500 4.200 3.200 4.200H6.200L8.800 12.500Q9.300 14 10.800 14H14.500Q13.900 16.700 12.200 17z" fill="url(#cp2)"/></svg>
<svg style="left:1185.5px;top:94.5px" width="7" height="4.5" viewBox="0 0 7 4.5"><path d="M0.600 0.600L3.500 3.600L6.400 0.600" fill="none" stroke="#333" stroke-width="1"/></svg>
<div class="t" style="left:9.0px;top:69.3px;font-size:8.4px;line-height:10.1px;color:#2b2b2b;font-weight:normal;transform-origin:0 50%;transform:scaleX(0.817)">Paste</div>
<div class="t" style="left:47.5px;top:47.6px;font-size:8.3px;line-height:10.0px;color:#a6a6a6;font-weight:normal;transform-origin:0 50%;transform:scaleX(0.890)">Cut</div>
<div class="t" style="left:47.5px;top:64.1px;font-size:8.3px;line-height:10.0px;color:#a6a6a6;font-weight:normal;transform-origin:0 50%;transform:scaleX(0.903)">Copy</div>
<div class="t" style="left:47.5px;top:80.4px;font-size:8.3px;line-height:10.0px;color:#a6a6a6;font-weight:normal;transform-origin:0 50%;transform:scaleX(0.893)">Format Painter</div>
<div class="t" style="left:32.0px;top:94.4px;font-size:8.2px;line-height:9.8px;color:#2e2e2e;font-weight:normal;transform-origin:0 50%;transform:scaleX(0.913)">Clipboard</div>
<div class="t" style="left:118.0px;top:68.0px;font-size:8.4px;line-height:10.1px;color:#2b2b2b;font-weight:normal;transform-origin:0 50%;transform:scaleX(0.865)">New</div>
<div class="t" style="left:114.5px;top:78.6px;font-size:8.4px;line-height:10.1px;color:#2b2b2b;font-weight:normal;transform-origin:0 50%;transform:scaleX(0.805)">Slide</div>
<div class="t" style="left:155.5px;top:47.4px;font-size:8.3px;line-height:10.0px;color:#2b2b2b;font-weight:normal;transform-origin:0 50%;transform:scaleX(0.903)">Layout</div>
<div class="t" style="left:155.5px;top:63.6px;font-size:8.3px;line-height:10.0px;color:#2b2b2b;font-weight:normal;transform-origin:0 50%;transform:scaleX(0.784)">Reset</div>
<div class="t" style="left:155.5px;top:80.0px;font-size:8.3px;line-height:10.0px;color:#2b2b2b;font-weight:normal;transform-origin:0 50%;transform:scaleX(0.867)">Section</div>
<div class="t" style="left:143.0px;top:94.4px;font-size:8.2px;line-height:9.8px;color:#2e2e2e;font-weight:normal;transform-origin:0 50%;transform:scaleX(0.807)">Slides</div>
<div class="t" style="left:312.5px;top:52.2px;font-size:8.2px;line-height:9.8px;color:#b9b9b9;font-weight:normal;transform-origin:0 50%;transform:scaleX(0.828)">32+</div>
<div class="t" style="left:343.0px;top:50.7px;font-size:10.5px;line-height:12.6px;color:#a6a6a6;font-weight:normal;transform-origin:0 50%;transform:scaleX(0.998);-webkit-text-stroke:0">A</div>
<div class="t" style="left:360.0px;top:52.2px;font-size:9px;line-height:10.8px;color:#a6a6a6;font-weight:normal;transform-origin:0 50%;transform:scaleX(0.964)">A</div>
<div class="t" style="left:377.5px;top:50.7px;font-size:10.5px;line-height:12.6px;color:#a6a6a6;font-weight:normal;transform-origin:0 50%;transform:scaleX(0.927);-webkit-text-stroke:0">A</div>
<div class="t" style="left:207.5px;top:72.1px;font-size:8.6px;line-height:10.3px;color:#8e8e8e;font-weight:bold;transform-origin:0 50%;transform:scaleX(0.804);-webkit-text-stroke:0">B</div>
<div class="t" style="left:225.5px;top:72.1px;font-size:8.6px;line-height:10.3px;color:#9a9a9a;font-weight:normal;transform-origin:0 50%;transform:scaleX(0.837)">I</div>
<div class="t" style="left:240.0px;top:71.9px;font-size:8.6px;line-height:10.3px;color:#a6a6a6;font-weight:normal;transform-origin:0 50%;transform:scaleX(0.804)">U</div>
<div class="t" style="left:256.5px;top:72.1px;font-size:8.6px;line-height:10.3px;color:#8e8e8e;font-weight:normal;transform-origin:0 50%;transform:scaleX(0.698)">S</div>
<div class="t" style="left:270.5px;top:72.9px;font-size:7.6px;line-height:9.1px;color:#a6a6a6;font-weight:normal;transform-origin:0 50%;transform:scaleX(1.065)">ab</div>
<div class="t" style="left:287.0px;top:71.2px;font-size:8.2px;line-height:9.8px;color:#a6a6a6;font-weight:normal;transform-origin:0 50%;transform:scaleX(0.968)">AV</div>
<div class="t" style="left:313.5px;top:72.1px;font-size:8.6px;line-height:10.3px;color:#a6a6a6;font-weight:normal;transform-origin:0 50%;transform:scaleX(0.999)">Aa</div>
<div class="t" style="left:370.0px;top:70.7px;font-size:9px;line-height:10.8px;color:#a6a6a6;font-weight:normal;transform-origin:0 50%;transform:scaleX(1.081)">A</div>
<div class="t" style="left:283.8px;top:94.4px;font-size:8.2px;line-height:9.8px;color:#2e2e2e;font-weight:normal;transform-origin:0 50%;transform:scaleX(0.866)">Font</div>
<div class="t" style="left:530.5px;top:47.4px;font-size:8.3px;line-height:10.0px;color:#a6a6a6;font-weight:normal;transform-origin:0 50%;transform:scaleX(0.885)">Text Direction</div>
<div class="t" style="left:530.5px;top:63.8px;font-size:8.3px;line-height:10.0px;color:#a6a6a6;font-weight:normal;transform-origin:0 50%;transform:scaleX(0.893)">Align Text</div>
<div class="t" style="left:530.5px;top:80.4px;font-size:8.3px;line-height:10.0px;color:#a6a6a6;font-weight:normal;transform-origin:0 50%;transform:scaleX(0.898)">Convert to SmartArt</div>
<div class="t" style="left:483.0px;top:94.4px;font-size:8.2px;line-height:9.8px;color:#2e2e2e;font-weight:normal;transform-origin:0 50%;transform:scaleX(0.858)">Paragraph</div>
<div class="t" style="left:732.5px;top:68.1px;font-size:8.4px;line-height:10.1px;color:#2b2b2b;font-weight:normal;transform-origin:0 50%;transform:scaleX(0.899)">Arrange</div>
<div class="t" style="left:767.0px;top:68.1px;font-size:8.4px;line-height:10.1px;color:#a6a6a6;font-weight:normal;transform-origin:0 50%;transform:scaleX(0.878)">Quick</div>
<div class="t" style="left:763.0px;top:78.8px;font-size:8.4px;line-height:10.1px;color:#a6a6a6;font-weight:normal;transform-origin:0 50%;transform:scaleX(0.811)">Styles</div>
<div class="t" style="left:807.5px;top:47.4px;font-size:8.3px;line-height:10.0px;color:#a6a6a6;font-weight:normal;transform-origin:0 50%;transform:scaleX(0.848)">Shape Fill</div>
<div class="t" style="left:807.5px;top:63.8px;font-size:8.3px;line-height:10.0px;color:#a6a6a6;font-weight:normal;transform-origin:0 50%;transform:scaleX(0.880)">Shape Outline</div>
<div class="t" style="left:807.5px;top:80.4px;font-size:8.3px;line-height:10.0px;color:#a6a6a6;font-weight:normal;transform-origin:0 50%;transform:scaleX(0.850)">Shape Effects</div>
<div class="t" style="left:723.8px;top:94.4px;font-size:8.2px;line-height:9.8px;color:#2e2e2e;font-weight:normal;transform-origin:0 50%;transform:scaleX(0.889)">Drawing</div>
<div class="t" style="left:889.8px;top:47.3px;font-size:8.3px;line-height:10.0px;color:#2b2b2b;font-weight:normal;transform-origin:0 50%;transform:scaleX(0.872)">Find and Replace</div>
<div class="t" style="left:889.8px;top:63.8px;font-size:8.3px;line-height:10.0px;color:#2b2b2b;font-weight:normal;transform-origin:0 50%;transform:scaleX(0.854)">Replace Fonts</div>
<div class="t" style="left:889.8px;top:80.2px;font-size:8.3px;line-height:10.0px;color:#2b2b2b;font-weight:normal;transform-origin:0 50%;transform:scaleX(0.811)">Select</div>
<div class="t" style="left:901.6px;top:94.4px;font-size:8.2px;line-height:9.8px;color:#2e2e2e;font-weight:normal;transform-origin:0 50%;transform:scaleX(0.934)">Editing</div>
<div class="t" style="left:963.5px;top:69.0px;font-size:8.4px;line-height:10.1px;color:#2b2b2b;font-weight:normal;transform-origin:0 50%;transform:scaleX(0.901)">Dictate</div>
<div class="t" style="left:966.3px;top:94.4px;font-size:8.2px;line-height:9.8px;color:#2e2e2e;font-weight:normal;transform-origin:0 50%;transform:scaleX(0.849)">Voice</div>
<div class="t" style="left:1000.0px;top:69.0px;font-size:8.4px;line-height:10.1px;color:#a6a6a6;font-weight:normal;transform-origin:0 50%;transform:scaleX(0.891)">Sensitivity</div>
<div class="t" style="left:1000.6px;top:94.4px;font-size:8.2px;line-height:9.8px;color:#2e2e2e;font-weight:normal;transform-origin:0 50%;transform:scaleX(0.874)">Sensitivity</div>
<div class="t" style="left:1046.8px;top:69.0px;font-size:8.4px;line-height:10.1px;color:#2b2b2b;font-weight:normal;transform-origin:0 50%;transform:scaleX(0.922)">Add-ins</div>
<div class="t" style="left:1047.4px;top:94.4px;font-size:8.2px;line-height:9.8px;color:#2e2e2e;font-weight:normal;transform-origin:0 50%;transform:scaleX(0.886)">Add-ins</div>
<div class="t" style="left:1086.7px;top:69.0px;font-size:8.4px;line-height:10.1px;color:#2b2b2b;font-weight:normal;transform-origin:0 50%;transform:scaleX(0.838)">Designer</div>
<div class="t" style="left:1119.7px;top:69.0px;font-size:8.4px;line-height:10.1px;color:#2b2b2b;font-weight:normal;transform-origin:0 50%;transform:scaleX(0.951)">Copilot</div>

<!-- ============ LEFT PANE ============ -->
<div class="abs" style="left:0;top:105px;width:212px;height:523px;background:#f0f0f0"></div>
<div class="abs" style="left:211px;top:105px;width:1px;height:524px;background:#dadada"></div>
<div class="t" style="left:1px;top:117px;color:#b7472a;font-size:9px">1</div>
<div class="abs" style="left:12px;top:115px;width:187px;height:108px;border:2px solid #b5432a;border-radius:4px;background:#f99d0f;overflow:hidden">
<svg style="left:0;top:0" width="183" height="104" viewBox="334.5 164 740 418" preserveAspectRatio="none"><use href="#slideart"/></svg>
</div>

<!-- ============ MAIN SLIDE ============ -->
<div class="abs" style="left:336px;top:105px;width:820px;height:476px;overflow:hidden;background:#fa9f0e">
<svg style="left:-336px;top:-105px" width="1200" height="659" viewBox="0 0 1200 659">
<defs>
<linearGradient id="bg1" x1="0" y1="0" x2="0" y2="1"><stop offset="0" stop-color="#ffad06"/><stop offset="0.55" stop-color="#fea70a"/><stop offset="1" stop-color="#f99a10"/></linearGradient>
<radialGradient id="bg2" gradientUnits="userSpaceOnUse" cx="330" cy="610" r="400"><stop offset="0" stop-color="#ee7d0b" stop-opacity="0.62"/><stop offset="0.45" stop-color="#f0820c" stop-opacity="0.32"/><stop offset="1" stop-color="#f0820c" stop-opacity="0"/></radialGradient>
<radialGradient id="bg3" gradientUnits="userSpaceOnUse" cx="1160" cy="420" r="380"><stop offset="0" stop-color="#f48c10" stop-opacity="0.45"/><stop offset="1" stop-color="#f48c10" stop-opacity="0"/></radialGradient>
<filter id="sh" filterUnits="userSpaceOnUse" x="300" y="60" width="900" height="560"><feDropShadow dx="-2" dy="9" stdDeviation="4.5" flood-color="#a85200" flood-opacity="0.32"/></filter>
<g id="slideart">
<rect x="330" y="90" width="830" height="495" fill="url(#bg1)"/>
<rect x="330" y="90" width="830" height="495" fill="url(#bg2)"/>
<rect x="330" y="90" width="830" height="495" fill="url(#bg3)"/>
<g filter="url(#sh)"><path d="M616.3 120.0C616.3 120.0 624.6 115.5 632.6 113.8C640.5 112.1 649.9 111.3 657.6 111.3C665.3 111.3 666.8 111.1 672.6 113.8C678.4 116.4 681.4 119.5 687.7 125.0C693.9 130.6 698.9 136.3 705.2 142.6C711.4 148.8 715.2 153.7 720.2 157.6C725.3 161.5 731.5 162.6 731.5 162.6C731.5 162.6 730.8 154.4 731.5 150.1C732.2 145.8 735.2 140.1 735.2 140.1C735.2 140.1 739.7 144.6 741.5 146.3C743.3 148.0 744.8 148.8 744.8 148.8C744.8 148.8 746.2 143.0 747.8 140.1C749.3 137.2 752.8 133.8 752.8 133.8C752.8 133.8 756.8 139.4 758.3 142.6C759.7 145.7 760.3 150.1 760.3 150.1C760.3 150.1 770.7 149.9 775.3 145.1C779.9 140.3 781.8 135.6 784.1 125.0C786.4 114.4 787.3 90.0 787.3 90.0C787.3 90.0 832.9 90.0 832.9 90.0C832.9 90.0 824.5 109.3 821.6 117.5C818.7 125.7 822.0 126.3 817.9 132.6C813.8 138.8 806.4 144.3 800.4 150.1C794.3 155.9 790.3 157.2 786.6 162.6C782.8 168.0 780.8 178.1 780.8 178.1C780.8 178.1 775.8 174.6 773.3 176.4C770.8 178.2 767.8 187.7 767.8 187.7C767.8 187.7 763.2 183.9 760.8 185.1C758.4 186.4 755.3 193.9 755.3 193.9C755.3 193.9 751.3 187.2 747.8 188.2C744.2 189.1 737.0 198.9 737.0 198.9C737.0 198.9 733.4 192.1 730.2 187.7C727.1 183.2 724.6 178.0 720.7 175.6C716.9 173.2 710.2 175.1 710.2 175.1C710.2 175.1 705.5 172.6 700.2 172.6C694.9 172.6 682.6 175.1 682.6 175.1C682.6 175.1 682.0 168.7 678.1 165.6C674.3 162.5 668.0 159.9 662.6 158.9C657.2 157.8 650.1 160.1 650.1 160.1C650.1 160.1 650.5 151.2 648.1 145.1C645.7 138.9 643.7 132.9 637.6 128.0C631.4 123.2 616.3 120.0 616.3 120.0Z" fill="#141414"/>
<path d="M842.0 302.6C842.0 302.6 848.7 300.0 855.0 299.1C861.4 298.2 868.3 297.9 875.1 298.1C881.8 298.3 884.8 298.3 890.1 300.1C895.4 301.9 897.8 303.8 902.6 307.6C907.4 311.5 910.8 314.8 915.1 320.1C919.5 325.4 921.3 329.4 925.2 335.2C929.0 340.9 931.8 346.0 935.2 350.2C938.6 354.4 939.8 355.5 942.7 357.2C945.6 358.9 950.2 359.0 950.2 359.0C950.2 359.0 948.7 351.3 948.7 347.7C948.7 344.1 949.2 342.6 950.2 340.2C951.2 337.8 954.0 335.2 954.0 335.2C954.0 335.2 957.2 339.7 958.5 342.2C959.8 344.7 960.7 348.2 960.7 348.2C960.7 348.2 965.2 347.7 965.2 347.7C965.2 347.7 966.5 343.2 967.7 340.2C968.9 337.2 971.5 332.2 971.5 332.2C971.5 332.2 975.1 335.9 976.3 338.9C977.5 341.9 977.7 345.0 977.8 347.7C977.9 350.3 976.8 352.7 976.8 352.7C976.8 352.7 981.7 351.7 985.3 350.2C988.8 348.7 991.9 348.1 995.3 344.7C998.7 341.3 999.9 338.8 1002.8 332.7C1005.7 326.5 1006.9 320.8 1010.3 312.6C1013.7 304.4 1018.0 295.1 1020.3 290.1C1022.6 285.0 1022.3 286.3 1022.3 286.3C1022.3 286.3 1025.9 283.2 1030.4 280.1C1034.8 276.9 1039.1 273.4 1045.4 270.1C1051.6 266.7 1055.7 264.6 1062.9 262.5C1070.1 260.5 1082.9 259.5 1082.9 259.5C1082.9 259.5 1076.3 264.1 1072.9 267.5C1069.6 271.0 1067.6 273.2 1065.4 277.6C1063.2 281.9 1062.1 285.3 1061.7 290.1C1061.2 294.9 1062.2 298.8 1062.9 302.6C1063.6 306.5 1063.9 307.9 1065.4 310.1C1067.0 312.3 1070.9 314.1 1070.9 314.1C1070.9 314.1 1063.9 313.0 1060.4 315.1C1056.9 317.3 1055.7 321.3 1052.9 325.1C1050.1 329.0 1047.8 331.2 1045.9 335.2C1044.0 339.1 1042.9 345.7 1042.9 345.7C1042.9 345.7 1034.7 343.8 1030.4 345.2C1026.0 346.5 1023.1 350.2 1020.3 352.7C1017.5 355.2 1015.8 358.2 1015.8 358.2C1015.8 358.2 1008.3 359.9 1005.3 362.7C1002.3 365.5 1001.9 368.3 1000.3 372.7C998.7 377.2 996.8 385.8 996.8 385.8C996.8 385.8 990.3 380.2 990.3 380.2C990.3 380.2 983.3 390.3 983.3 390.3C983.3 390.3 977.8 385.3 977.8 385.3C977.8 385.3 969.0 394.0 969.0 394.0C969.0 394.0 962.7 386.8 962.7 386.8C962.7 386.8 959.9 386.5 957.2 388.3C954.6 390.0 949.0 395.8 949.0 395.8C949.0 395.8 946.1 389.2 943.9 385.3C941.8 381.3 940.3 379.1 937.7 375.2C935.0 371.4 934.0 368.1 930.2 365.2C926.3 362.3 922.5 361.2 917.7 360.2C912.8 359.2 909.7 359.4 905.1 360.2C900.6 361.0 893.9 364.5 893.9 364.5C893.9 364.5 893.8 356.4 892.6 352.7C891.4 349.0 890.5 347.6 887.6 345.2C884.7 342.8 881.7 340.4 877.6 340.2C873.5 340.0 866.3 344.2 866.3 344.2C866.3 344.2 868.3 337.8 867.6 332.7C866.8 327.6 865.4 322.5 862.6 317.6C859.7 312.8 856.5 310.5 852.5 307.6C848.6 304.7 842.0 302.6 842.0 302.6Z" fill="#141414"/>
<path d="M954.3 464.9C954.3 464.9 962.2 457.3 968.1 453.9C973.9 450.4 978.3 448.7 984.7 446.9C991.0 445.2 994.9 444.7 1001.2 444.7C1007.6 444.7 1012.0 445.2 1017.8 446.9C1023.6 448.7 1025.8 449.6 1031.6 453.9C1037.4 458.1 1042.9 464.8 1048.2 469.0C1053.5 473.3 1055.0 474.0 1059.2 475.9C1063.5 477.9 1066.9 478.7 1070.3 479.0C1073.6 479.2 1076.6 477.3 1076.6 477.3C1076.6 477.3 1073.8 469.6 1072.5 464.9C1071.1 460.2 1069.7 453.0 1069.7 453.0C1069.7 453.0 1074.5 455.0 1077.2 456.6C1079.8 458.2 1083.5 461.3 1083.5 461.3C1083.5 461.3 1084.6 456.0 1085.5 452.5C1086.4 448.9 1088.2 442.8 1088.2 442.8C1088.2 442.8 1093.5 446.5 1095.7 449.7C1097.8 452.9 1099.5 459.7 1099.5 459.7C1099.5 459.7 1103.9 460.7 1106.2 458.5C1108.4 456.4 1109.7 454.8 1111.1 448.3C1112.6 441.8 1113.2 434.1 1113.9 424.9C1114.6 415.6 1113.8 409.0 1115.0 400.0C1116.2 391.0 1116.9 385.9 1120.0 377.9C1123.1 369.9 1124.1 366.5 1131.0 358.6C1137.9 350.6 1155.9 336.5 1155.9 336.5C1155.9 336.5 1189.0 336.5 1189.0 336.5C1189.0 336.5 1189.0 427.6 1189.0 427.6C1189.0 427.6 1164.4 427.7 1155.9 430.4C1147.4 433.0 1149.5 436.6 1144.8 441.4C1140.2 446.2 1135.0 449.9 1131.6 455.2C1128.2 460.5 1127.5 463.7 1127.2 469.0C1126.8 474.4 1129.9 482.9 1129.9 482.9C1129.9 482.9 1123.0 482.1 1120.5 484.2C1118.1 486.4 1117.2 493.9 1117.2 493.9C1117.2 493.9 1111.6 493.9 1109.5 495.3C1107.4 496.7 1106.2 501.1 1106.2 501.1C1106.2 501.1 1098.0 496.2 1095.1 498.0C1092.2 499.8 1091.0 510.5 1091.0 510.5C1091.0 510.5 1083.6 502.6 1078.6 499.4C1073.5 496.2 1070.6 495.2 1064.7 493.9C1058.9 492.6 1053.9 492.3 1048.2 492.5C1042.4 492.8 1039.2 493.1 1034.9 495.3C1030.7 497.5 1026.1 503.8 1026.1 503.8C1026.1 503.8 1023.7 494.6 1020.6 491.1C1017.4 487.6 1014.2 485.1 1009.5 485.6C1004.8 486.1 996.3 493.9 996.3 493.9C996.3 493.9 994.3 484.6 991.6 480.1C988.8 475.6 986.4 473.3 981.9 470.4C977.4 467.6 973.4 466.2 968.1 465.2C962.8 464.1 954.3 464.9 954.3 464.9Z" fill="#141414"/>
<path d="M1077.2 94.0C1077.2 94.0 1078.6 106.2 1079.4 112.0C1080.2 117.8 1081.4 124.0 1081.4 124.0C1081.4 124.0 1085.4 119.8 1088.2 119.0C1091.1 118.3 1096.2 120.0 1096.2 120.0C1096.2 120.0 1097.4 122.9 1098.2 125.0C1099.1 127.2 1100.6 131.0 1100.6 131.0C1100.6 131.0 1105.4 126.6 1108.2 126.0C1111.0 125.5 1115.2 128.0 1115.2 128.0C1115.2 128.0 1120.3 130.0 1120.3 130.0C1120.3 130.0 1124.0 126.4 1126.3 127.0C1128.6 127.7 1132.3 133.3 1132.3 133.3C1132.3 133.3 1134.5 126.6 1136.3 124.0C1138.0 121.5 1141.3 120.0 1141.3 120.0C1141.3 120.0 1143.3 124.4 1143.3 124.4C1143.3 124.4 1140.2 118.4 1147.3 116.0C1154.4 113.6 1180.4 112.0 1180.4 112.0C1180.4 112.0 1180.4 94.0 1180.4 94.0C1180.4 94.0 1077.2 94.0 1077.2 94.0Z" fill="#141414"/>
<path d="M768.0 213.8C768.0 213.8 771.2 207.5 773.8 205.0C776.3 202.6 778.7 201.5 781.3 201.3C784.0 201.0 784.0 200.7 787.6 203.8C791.2 206.9 796.0 213.5 800.1 217.6C804.2 221.7 806.0 225.1 808.9 225.1C811.7 225.1 812.0 220.9 815.1 217.6C818.2 214.2 820.8 210.2 825.1 207.5C829.5 204.9 833.1 203.8 837.7 203.8C842.2 203.8 845.6 204.9 848.9 207.5C852.3 210.2 853.7 213.2 855.2 217.6C856.6 221.9 857.2 225.3 856.4 230.1C855.7 234.9 853.0 238.8 851.4 242.6C849.8 246.5 847.4 248.0 848.2 250.1C848.9 252.3 851.2 252.4 855.2 253.9C859.2 255.3 865.3 256.0 869.0 257.6C872.6 259.3 873.2 260.0 874.0 262.6C874.7 265.3 873.9 268.4 872.7 271.4C871.5 274.4 867.7 278.2 867.7 278.2C867.7 278.2 864.6 274.2 862.7 273.9C860.8 273.7 857.7 276.9 857.7 276.9C857.7 276.9 854.6 273.1 852.7 272.7C850.8 272.2 847.7 274.4 847.7 274.4C847.7 274.4 844.6 272.5 842.7 272.7C840.7 272.8 837.7 275.2 837.7 275.2C837.7 275.2 833.3 280.8 830.1 285.2C827.0 289.5 824.3 292.9 821.4 297.7C818.5 302.5 817.3 304.9 815.1 310.2C812.9 315.5 811.3 321.5 810.1 325.3C808.9 329.0 808.9 329.8 808.9 329.8C808.9 329.8 805.7 330.0 802.6 325.3C799.5 320.5 795.9 312.4 792.6 305.2C789.2 298.0 787.0 293.5 785.1 287.7C783.1 281.9 782.6 280.0 782.6 275.2C782.6 270.4 783.6 267.9 785.1 262.6C786.5 257.3 788.9 252.4 790.1 247.6C791.3 242.8 791.7 241.0 791.3 237.6C790.9 234.2 789.3 232.5 788.1 230.1C786.9 227.7 785.1 225.1 785.1 225.1C785.1 225.1 780.1 226.6 780.1 226.6C780.1 226.6 777.2 221.7 775.0 220.1C772.9 218.4 769.0 218.1 769.0 218.1C769.0 218.1 768.0 213.8 768.0 213.8Z" fill="#fbfbfb"/>
<path d="M841.0 458.5C841.5 456.0 841.9 452.4 843.8 449.7C845.7 447.1 847.5 445.5 850.7 444.7C853.9 443.9 856.4 444.3 860.4 445.6C864.4 446.8 867.4 449.5 871.4 451.1C875.4 452.7 879.0 455.7 881.1 453.9C883.2 452.0 881.1 446.5 882.5 441.4C883.8 436.4 885.1 431.8 888.0 427.6C890.9 423.5 893.7 421.6 897.7 419.9C901.6 418.2 904.2 417.8 908.7 418.8C913.2 419.7 917.6 421.6 921.1 424.9C924.7 428.1 925.8 431.1 927.2 435.9C928.6 440.7 928.4 445.7 928.3 449.7C928.2 453.7 924.3 455.3 926.7 456.6C929.0 457.9 935.4 457.0 940.5 456.6C945.5 456.2 949.2 454.4 952.9 454.7C956.6 454.9 958.7 455.8 959.8 458.0C960.9 460.2 958.4 466.3 958.4 466.3C958.4 466.3 960.9 470.4 959.8 472.4C958.7 474.3 952.9 476.2 952.9 476.2C952.9 476.2 948.4 473.8 946.0 474.6C943.6 475.3 940.5 480.1 940.5 480.1C940.5 480.1 936.2 478.4 933.6 478.7C930.9 479.0 926.7 481.7 926.7 481.7C926.7 481.7 926.0 488.4 923.9 493.9C921.8 499.4 919.3 505.2 915.6 510.5C911.9 515.8 909.3 517.5 904.6 521.5C899.8 525.5 896.3 528.3 890.8 531.2C885.2 534.1 875.6 536.7 875.6 536.7C875.6 536.7 873.4 536.0 874.2 532.6C875.0 529.1 878.1 524.6 879.7 518.8C881.3 512.9 881.9 508.6 882.5 502.2C883.0 495.8 882.5 485.6 882.5 485.6C882.5 485.6 875.6 481.5 875.6 481.5C875.6 481.5 873.8 477.5 871.4 475.9C869.0 474.4 863.1 473.5 863.1 473.5C863.1 473.5 859.2 469.0 856.2 467.7C853.3 466.3 848.0 466.6 848.0 466.6C848.0 466.6 842.9 464.5 841.6 463.0C840.3 461.4 840.6 461.1 841.0 458.5Z" fill="#fbfbfb"/>
<path d="M1170.0 197.0C1170.0 197.0 1160.3 197.0 1156.0 196.0C1151.7 195.0 1151.0 193.2 1147.7 191.8C1144.4 190.4 1142.5 189.2 1138.7 188.8C1135.0 188.4 1132.0 188.5 1128.2 189.5C1124.5 190.5 1122.1 192.0 1119.2 194.0C1116.3 196.0 1115.0 197.1 1113.1 200.0C1111.2 202.9 1110.3 205.2 1109.4 209.0C1108.5 212.8 1108.2 215.5 1108.6 219.6C1109.0 223.7 1110.1 226.9 1111.6 230.1C1113.1 233.3 1114.9 233.8 1116.2 236.1C1117.5 238.4 1119.6 240.1 1118.4 242.1C1117.2 244.1 1113.7 244.9 1110.1 246.6C1106.5 248.3 1102.8 249.2 1099.6 251.1C1096.4 253.0 1094.9 254.3 1093.6 256.5C1092.3 258.7 1092.3 260.0 1092.9 262.5C1093.5 265.0 1095.0 267.6 1096.6 269.5C1098.2 271.4 1101.1 272.5 1101.1 272.5C1101.1 272.5 1103.9 271.0 1105.6 270.3C1107.3 269.6 1108.1 269.2 1110.1 268.8C1112.1 268.4 1116.2 268.0 1116.2 268.0C1116.2 268.0 1131.2 263.5 1131.2 263.5C1131.2 263.5 1135.5 265.7 1138.7 268.0C1141.9 270.3 1144.4 272.8 1147.7 275.5C1151.0 278.2 1151.7 278.7 1156.0 282.3C1160.3 285.9 1170.0 294.0 1170.0 294.0C1170.0 294.0 1170.0 197.0 1170.0 197.0Z" fill="#f6f6f6"/>
<path d="M619.5 186.4C625.4 185.9 637.9 185.2 650.0 183.9C662.1 182.6 670.7 181.3 682.6 179.6C694.5 177.9 706.3 175.9 712.0 175.0" fill="none" stroke="#3b2317" stroke-width="3.4" stroke-linecap="round" stroke-linejoin="round"/>
<circle cx="621.5" cy="186.3" r="3.0" fill="#3b2317"/>
<circle cx="640.0" cy="185.0" r="2.4" fill="#3b2317"/>
<path d="M818.0 134.0C821.3 132.8 819.2 129.7 835.0 127.5C850.8 125.3 876.0 124.2 900.0 122.5C924.0 120.8 943.5 119.6 960.0 118.5C976.5 117.4 977.2 118.7 986.0 117.0C994.8 115.3 998.7 112.2 1006.0 109.5C1013.3 106.8 1020.5 104.2 1024.0 103.0" fill="none" stroke="#3b2317" stroke-width="4.0" stroke-linecap="round" stroke-linejoin="round"/>
<path d="M829.0 122.0C830.3 122.8 834.7 125.2 836.0 126.0" fill="none" stroke="#3b2317" stroke-width="2.6" stroke-linecap="round" stroke-linejoin="round"/>
<path d="M986.0 118.0C983.9 121.8 980.4 126.1 975.0 138.0C969.6 149.9 964.1 167.1 957.9 180.0C951.7 192.9 949.1 195.8 942.8 205.0C936.5 214.2 932.3 218.7 925.3 227.6C918.3 236.5 910.8 243.2 906.5 251.4C902.2 259.6 905.7 261.0 902.8 270.2C899.9 279.4 893.7 293.5 891.5 299.0" fill="none" stroke="#3b2317" stroke-width="3.2" stroke-linecap="round" stroke-linejoin="round"/>
<circle cx="942.0" cy="203.0" r="2.4" fill="#3b2317"/>
<circle cx="905.0" cy="253.0" r="2.6" fill="#3b2317"/>
<circle cx="966.0" cy="150.0" r="2.2" fill="#3b2317"/>
<path d="M846.3 387.8C856.2 388.0 878.4 388.5 897.6 389.0C916.8 389.5 936.7 390.1 946.0 390.3" fill="none" stroke="#3b2317" stroke-width="3.6" stroke-linecap="round" stroke-linejoin="round"/>
<circle cx="848.5" cy="387.8" r="3.0" fill="#3b2317"/>
<circle cx="899.0" cy="386.5" r="2.8" fill="#3b2317"/>
<path d="M1017.8 356.5C1018.8 360.1 1020.4 369.2 1022.8 375.2C1025.2 381.2 1028.2 383.0 1030.4 387.8C1032.6 392.6 1032.9 395.0 1034.0 400.0C1035.1 405.0 1034.9 410.1 1036.0 413.8C1037.1 417.5 1039.2 418.2 1039.9 419.3" fill="none" stroke="#3b2317" stroke-width="2.8" stroke-linecap="round" stroke-linejoin="round"/>
<circle cx="1036.5" cy="392.0" r="2.6" fill="#3b2317"/>
<circle cx="1039.5" cy="418.0" r="2.4" fill="#3b2317"/>
<path d="M1065.0 307.5C1069.3 304.5 1078.9 298.2 1087.6 292.0C1096.3 285.8 1102.2 281.8 1110.0 275.5C1117.8 269.2 1121.9 264.3 1128.2 259.0C1134.5 253.7 1136.9 253.4 1143.0 248.0C1149.1 242.6 1156.7 234.3 1160.0 231.0" fill="none" stroke="#3b2317" stroke-width="3.8" stroke-linecap="round" stroke-linejoin="round"/>
<path d="M1107.0 282.3C1107.9 282.9 1109.3 285.0 1111.6 285.3C1113.9 285.6 1117.3 284.8 1119.2 283.8C1121.1 282.8 1121.0 280.7 1121.4 280.0" fill="none" stroke="#3b2317" stroke-width="1.8" stroke-linecap="round" stroke-linejoin="round"/>
<path d="M1160.0 467.5C1155.0 471.0 1144.1 478.7 1133.8 485.6C1123.5 492.5 1115.2 496.7 1106.2 503.6C1097.2 510.5 1094.8 514.6 1086.8 521.5C1078.8 528.4 1074.8 532.6 1064.7 539.5C1054.6 546.4 1045.0 551.3 1034.4 557.4C1023.8 563.5 1019.0 566.5 1009.5 571.2C1000.0 575.9 989.7 579.9 985.0 582.0" fill="none" stroke="#2a1a12" stroke-width="3.2" stroke-linecap="round" stroke-linejoin="round"/>
<path d="M1064.7 539.5C1063.1 543.5 1060.1 552.2 1056.5 560.2C1052.9 568.2 1048.0 577.0 1046.0 581.0" fill="none" stroke="#2a1a12" stroke-width="2.6" stroke-linecap="round" stroke-linejoin="round"/>
<path d="M1106.2 503.6C1104.2 502.9 1099.2 500.6 1096.0 499.8C1092.8 499.0 1090.8 499.5 1089.6 499.4" fill="none" stroke="#2a1a12" stroke-width="2.2" stroke-linecap="round" stroke-linejoin="round"/>
<path d="M1144.8 480.8C1144.8 482.5 1144.8 488.1 1144.8 489.8" fill="none" stroke="#2a1a12" stroke-width="2.0" stroke-linecap="round" stroke-linejoin="round"/>
<circle cx="1034.0" cy="557.0" r="2.4" fill="#2a1a12"/>
<circle cx="1064.0" cy="539.0" r="2.4" fill="#2a1a12"/>
<path d="M1122.3 129.0C1120.4 130.3 1114.9 133.1 1112.2 136.0C1109.5 138.9 1110.5 139.8 1108.2 144.0C1105.9 148.2 1103.3 153.4 1100.2 158.0C1097.1 162.6 1093.7 166.1 1092.2 168.0" fill="none" stroke="#1c1410" stroke-width="3.0" stroke-linecap="round" stroke-linejoin="round"/>
<circle cx="1093.5" cy="166.5" r="3.2" fill="#1c1410"/>
<circle cx="1109.0" cy="141.0" r="2.6" fill="#1c1410"/>
<path d="M1102.2 185.1C1104.5 186.4 1109.6 189.0 1114.2 192.1C1118.8 195.2 1121.3 199.3 1126.3 201.2C1131.3 203.1 1134.2 201.1 1140.3 202.2C1146.4 203.3 1154.6 206.1 1158.0 207.0" fill="none" stroke="#1c1410" stroke-width="2.8" stroke-linecap="round" stroke-linejoin="round"/>
<circle cx="1104.0" cy="186.0" r="2.6" fill="#1c1410"/></g>
<ellipse cx="824.4" cy="227.1" rx="5.5" ry="3.3" transform="rotate(-30 824.4 227.1)" fill="#2a2422"/>
<ellipse cx="833.1" cy="230.8" rx="6.3" ry="4.3" transform="rotate(-30 833.1 230.8)" fill="#2a2422"/>
<ellipse cx="901.8" cy="444.2" rx="4.7" ry="7.7" transform="rotate(20 901.8 444.2)" fill="#3a3230"/>
<ellipse cx="912.3" cy="449.7" rx="3.0" ry="5.2" transform="rotate(15 912.3 449.7)" fill="#3a3230"/>
<ellipse cx="1134.9" cy="215.8" rx="6.0" ry="8.7" transform="rotate(-20 1134.9 215.8)" fill="#262222"/>
<ellipse cx="1128.5" cy="225.3" rx="3.9" ry="6.0" transform="rotate(-20 1128.5 225.3)" fill="#262222"/>
<ellipse cx="399.4" cy="536.8" rx="43.3" ry="10.1" transform="rotate(0 399.4 536.8)" fill="#fdfdfd"/>
<ellipse cx="477.5" cy="557.7" rx="47.3" ry="10.6" transform="rotate(0 477.5 557.7)" fill="#fdfdfd"/>
<path d="M405.9 405.1C403.3 408.8 403.3 414.0 403.1 420.1C402.9 426.2 403.7 431.4 404.8 436.8C405.8 442.3 406.4 445.1 408.4 448.5C410.4 451.9 408.4 453.2 415.1 454.3C421.9 455.5 436.4 456.4 443.5 454.3C450.6 452.3 449.9 449.1 452.2 443.5C454.5 437.9 455.3 432.2 455.5 425.1C455.7 418.1 455.5 411.7 453.2 406.8C450.9 401.8 450.5 400.4 443.5 399.2C436.5 398.1 424.0 399.8 416.8 400.9C409.6 402.0 408.6 401.4 405.9 405.1Z" fill="#8f6cb8" />
<path d="M387.6 420.1C387.6 420.1 397.9 416.4 397.9 416.4C397.9 416.4 398.2 425.6 399.2 430.1C400.3 434.7 400.2 437.6 403.4 440.2C406.6 442.7 415.9 443.5 415.9 443.5C415.9 443.5 415.9 457.7 415.9 457.7C415.9 457.7 409.4 455.9 405.1 453.5C400.8 451.1 397.0 449.0 393.7 445.2C390.5 441.3 389.3 438.3 388.1 433.5C386.9 428.7 387.6 420.1 387.6 420.1Z" fill="#0b0b0b" />
<path d="M458.8 418.8C458.8 418.8 468.9 416.4 468.9 416.4C468.9 416.4 470.5 428.3 470.2 433.5C469.9 438.7 469.8 440.3 467.2 443.5C464.6 446.7 461.4 448.1 456.8 450.2C452.3 452.3 443.5 454.3 443.5 454.3C443.5 454.3 443.5 441.8 443.5 441.8C443.5 441.8 450.6 441.2 453.5 439.3C456.4 437.4 457.5 435.8 458.5 431.8C459.5 427.9 458.8 418.8 458.8 418.8Z" fill="#0b0b0b" />
<ellipse cx="395.4" cy="407.6" rx="4.5" ry="8.0" transform="rotate(-6 395.4 407.6)" fill="#8cb445"/>
<ellipse cx="461.0" cy="407.6" rx="4.5" ry="8.0" transform="rotate(6 461.0 407.6)" fill="#8cb445"/>
<path d="M415.9 438.1C415.9 438.1 423.3 441.0 428.5 441.0C433.7 441.0 443.0 438.1 443.0 438.1C443.0 438.1 443.5 466.9 443.5 466.9C443.5 466.9 415.9 466.9 415.9 466.9C415.9 466.9 415.9 438.1 415.9 438.1Z" fill="#0b0b0b" />
<path d="M415.9 440.0C415.9 440.0 416.7 448.1 414.8 453.2C412.9 458.3 410.7 460.5 406.0 466.4C401.4 472.3 395.0 476.4 390.6 484.0C386.2 491.6 385.1 496.1 382.9 506.0C380.7 515.9 379.2 535.5 379.2 535.5C379.2 535.5 383.6 533.2 386.2 533.5C388.8 533.8 392.8 537.2 392.8 537.2C392.8 537.2 397.5 533.9 400.5 533.9C403.5 534.0 408.2 537.7 408.2 537.7C408.2 537.7 413.6 534.7 417.0 534.6C420.4 534.5 425.8 537.2 425.8 537.2C425.8 537.2 431.2 533.9 434.6 533.9C438.0 533.9 443.4 537.2 443.4 537.2C443.4 537.2 450.6 540.6 454.4 534.6C458.2 528.6 463.2 518.3 463.2 506.0C463.2 493.7 457.6 479.7 454.4 470.8C451.2 461.9 449.0 465.7 446.7 459.8C444.4 453.9 442.3 440.0 442.3 440.0C442.3 440.0 415.9 440.0 415.9 440.0Z" fill="#0b0b0b" />
<path d="M425.1 431.8C425.1 431.8 432.5 431.8 432.5 431.8C432.5 431.8 432.8 436.7 432.1 438.5C431.4 440.2 430.1 441.0 428.8 441.0C427.5 441.0 426.2 440.2 425.5 438.5C424.8 436.7 425.1 431.8 425.1 431.8Z" fill="#7fa53d" />
<ellipse cx="411.4" cy="417.6" rx="2.5" ry="2.7" transform="rotate(0 411.4 417.6)" fill="#8cb445"/>
<ellipse cx="447.5" cy="417.6" rx="2.5" ry="2.7" transform="rotate(0 447.5 417.6)" fill="#8cb445"/>
<path d="M414.3 416.8C414.2 413.6 414.2 410.7 415.9 408.4C417.7 406.2 420.9 405.8 423.5 405.1C426.0 404.4 426.7 404.7 429.3 404.8C431.9 404.8 434.1 404.7 436.8 405.4C439.5 406.1 441.9 406.2 443.5 408.4C445.0 410.6 445.0 413.6 444.8 416.8C444.7 420.0 444.2 422.2 442.7 425.1C441.1 428.0 439.4 429.9 436.8 431.8C434.2 433.7 432.2 434.8 429.3 434.8C426.4 434.8 424.3 433.7 421.8 431.8C419.3 429.9 417.9 428.0 416.4 425.1C415.0 422.2 414.4 420.0 414.3 416.8Z" fill="#8fb846" />
<path d="M421.0 404.2C421.0 404.2 425.6 403.1 428.5 403.1C431.4 403.1 436.0 404.2 436.0 404.2C436.0 404.2 443.8 410.8 440.1 412.4C436.4 414.0 420.6 414.0 416.9 412.4C413.2 410.8 421.0 404.2 421.0 404.2Z" fill="#8fb846" />
<path d="M403.2 406.9C403.2 406.9 410.7 403.5 415.5 402.8C420.3 402.1 428.1 403.1 428.1 403.1C428.1 403.1 423.3 406.2 421.0 408.6C418.6 410.9 417.2 412.5 415.8 415.1C414.4 417.7 413.7 422.2 413.7 422.2C413.7 422.2 411.4 418.1 409.4 415.1C407.3 412.2 403.2 406.9 403.2 406.9Z" fill="#8f6cb8" />
<path d="M428.9 403.1C428.9 403.1 436.8 401.5 441.5 401.4C446.1 401.4 453.1 402.8 453.1 402.8C453.1 402.8 449.8 411.7 448.3 415.1C446.8 418.5 445.3 420.6 445.3 420.6C445.3 420.6 444.6 416.2 443.1 413.7C441.6 411.3 440.1 410.1 437.4 408.0C434.6 406.0 428.9 403.1 428.9 403.1Z" fill="#8f6cb8" />
<ellipse cx="411.4" cy="418.1" rx="2.2" ry="2.6" transform="rotate(0 411.4 418.1)" fill="#8cb445"/>
<ellipse cx="446.5" cy="417.3" rx="2.0" ry="2.5" transform="rotate(0 446.5 417.3)" fill="#8cb445"/>
<ellipse cx="422.1" cy="418.1" rx="3.7" ry="1.8" transform="rotate(0 422.1 418.1)" fill="#f4f4e8"/>
<ellipse cx="436.1" cy="418.1" rx="3.7" ry="1.8" transform="rotate(0 436.1 418.1)" fill="#f4f4e8"/>
<ellipse cx="423.1" cy="418.3" rx="1.2" ry="1.3" transform="rotate(0 423.1 418.3)" fill="#222"/>
<ellipse cx="435.1" cy="418.3" rx="1.2" ry="1.3" transform="rotate(0 435.1 418.3)" fill="#222"/>
<path d="M418.1 414.1L425.5 416.3 M432.8 416.3L439.8 413.4" stroke="#161616" stroke-width="1.6" stroke-linecap="round"/>
<path d="M431.5 415.9C431.5 415.9 427.0 421.8 427.8 423.5C428.6 425.1 435.5 424.5 435.5 424.5C435.5 424.5 431.5 415.9 431.5 415.9Z" fill="#74993a" />
<path d="M424.3 426.0C424.3 426.0 427.4 425.5 429.3 425.5C431.2 425.5 434.3 426.0 434.3 426.0C434.3 426.0 433.6 428.9 432.6 429.8C431.7 430.7 430.6 430.8 429.3 430.8C428.0 430.8 426.9 430.7 426.0 429.8C425.0 428.9 424.3 426.0 424.3 426.0Z" fill="#7b1f2c" />
<path d="M425.1 426.1C425.1 426.1 427.7 425.6 429.3 425.6C430.9 425.6 433.5 426.1 433.5 426.1C433.5 426.1 433.6 427.1 432.8 427.5C432.0 427.8 430.6 427.8 429.3 427.8C428.0 427.8 426.6 427.8 425.8 427.5C425.0 427.1 425.1 426.1 425.1 426.1Z" fill="#fafafa" />
<ellipse cx="427.8" cy="399.3" rx="26.9" ry="7.9" transform="rotate(-8 427.8 399.3)" fill="#0b0b0b"/>
<path d="M416.2 360.9C416.2 360.9 420.1 363.7 422.3 365.2C424.6 366.8 425.7 367.2 427.8 368.9C430.0 370.7 432.2 372.4 433.6 374.4C434.9 376.4 434.1 377.3 434.9 379.3C435.7 381.3 436.6 382.8 437.7 384.8C438.7 386.7 440.4 389.4 440.4 389.4C440.4 389.4 430.8 395.0 425.1 396.0C419.4 396.9 410.6 394.3 410.6 394.3C410.6 394.3 410.6 390.3 410.3 387.8C410.1 385.3 408.7 383.8 409.2 381.2C409.8 378.7 412.7 376.8 413.2 374.4C413.7 372.0 411.4 371.3 412.0 368.7C412.5 366.1 416.2 360.9 416.2 360.9Z" fill="#0b0b0b" />
<path d="M411.0 392.7Q423.7 386.7 440.0 387.9" fill="none" stroke="#a58bcf" stroke-width="1.6"/>
<path d="M444.7 486.2C444.7 486.2 447.1 493.0 445.6 497.6C444.1 502.3 439.7 504.6 436.8 510.4C433.9 516.2 431.3 521.7 430.6 528.0C430.0 534.4 430.6 538.3 433.5 543.4C436.4 548.5 439.9 551.2 445.6 554.4C451.3 557.6 456.4 558.7 463.2 559.9C470.0 561.1 474.0 561.0 480.8 560.8C487.6 560.6 492.1 560.7 498.4 559.0C504.8 557.4 509.0 555.6 513.8 552.2C518.7 548.8 521.3 545.9 523.7 541.2C526.1 536.6 526.5 533.5 526.1 528.0C525.8 522.5 524.2 518.1 521.7 512.6C519.2 507.1 515.0 504.5 513.2 499.4C511.3 494.3 512.3 486.2 512.3 486.2C512.3 486.2 444.7 486.2 444.7 486.2Z" fill="#585858" />
<ellipse cx="478.6" cy="482.9" rx="34.8" ry="12.1" transform="rotate(0 478.6 482.9)" fill="#585858"/>
<ellipse cx="478.6" cy="483.6" rx="32.6" ry="9.2" transform="rotate(0 478.6 483.6)" fill="#a5c350"/>
<ellipse cx="474.2" cy="455.8" rx="5.5" ry="5.5" transform="rotate(0 474.2 455.8)" fill="#aecb62"/>
<ellipse cx="490.3" cy="452.1" rx="4.8" ry="4.8" transform="rotate(0 490.3 452.1)" fill="#80a23c"/>
<ellipse cx="497.3" cy="463.8" rx="2.9" ry="2.9" transform="rotate(0 497.3 463.8)" fill="#aecb62"/>
<ellipse cx="466.1" cy="468.6" rx="2.9" ry="2.9" transform="rotate(0 466.1 468.6)" fill="#aecb62"/>
<ellipse cx="484.8" cy="468.6" rx="3.1" ry="3.1" transform="rotate(0 484.8 468.6)" fill="#aecb62"/>
<ellipse cx="476.0" cy="480.7" rx="2.6" ry="2.6" transform="rotate(0 476.0 480.7)" fill="#86a743"/>
<ellipse cx="492.3" cy="478.5" rx="4.4" ry="4.4" transform="rotate(0 492.3 478.5)" fill="#86a743"/>
<ellipse cx="481.9" cy="435.6" rx="2.5" ry="2.5" transform="rotate(0 481.9 435.6)" fill="#80a23c"/>
<ellipse cx="489.4" cy="440.2" rx="2.5" ry="2.5" transform="rotate(0 489.4 440.2)" fill="#b3cf6a"/>
<text x="509.5" y="390.0" font-family="Liberation Sans, sans-serif" font-size="39.4" font-weight="bold" fill="#0d0d0d" textLength="269.5" lengthAdjust="spacingAndGlyphs" stroke="#0d0d0d" stroke-width="1.10" stroke-linejoin="round" >Witch’s Brew</text>
<text x="509.7" y="423.6" font-family="Liberation Sans, sans-serif" font-size="23.3" font-weight="bold" fill="#0d0d0d" textLength="241.0" lengthAdjust="spacingAndGlyphs" stroke="#0d0d0d" stroke-width="0.70" stroke-linejoin="round" >Fractions Workshop</text>
<text x="509.5" y="453.2" font-family="Liberation Sans, sans-serif" font-size="23.3" font-weight="bold" fill="#0d0d0d" textLength="120.5" lengthAdjust="spacingAndGlyphs" stroke="#0d0d0d" stroke-width="0.70" stroke-linejoin="round" >Ages 7-11</text>
<text x="377.5" y="247.6" font-family="Liberation Sans, sans-serif" font-size="31.0" font-weight="bold" fill="#fffdf5" textLength="62.5" lengthAdjust="spacingAndGlyphs" stroke="#fffdf5" stroke-width="0.70" stroke-linejoin="round" >Expl</text>
<text x="476.0" y="247.6" font-family="Liberation Sans, sans-serif" font-size="31.0" font-weight="bold" fill="#fffdf5" textLength="28.0" lengthAdjust="spacingAndGlyphs" stroke="#fffdf5" stroke-width="0.70" stroke-linejoin="round" >re</text>
<text x="377.5" y="270.4" font-family="Liberation Sans, sans-serif" font-size="13.4" font-weight="bold" fill="#fff6dc" textLength="128.0" lengthAdjust="spacing" stroke="#fff6dc" stroke-width="0.30" stroke-linejoin="round" >LEARNING</text>
<text x="378.0" y="296.2" font-family="Liberation Sans, sans-serif" font-size="10.6" font-weight="normal" fill="#ffe7ae" textLength="126.3" lengthAdjust="spacingAndGlyphs" >Maths and English tuition</text>
<circle cx="457.9" cy="238.1" r="14.9" fill="#fff8e0"/><circle cx="457.9" cy="238.1" r="13.6" fill="#2ea2ee"/>
<path d="M446.5 231.5q2-5 7-7.5l3 1.5-1 3 3 0.5-1.5 3.5-3.5 1-1 3.5-3.500 1zM445.5 240l3-1.5 3.5 2 0.500 3.500-2 4-2.500-1.500zM460.500 229.500l3-3.500 5 2.500 2.500 5-1 5-3 3.500-3.500-3 0.500-3.500-3-2.500zM458 226l3-1.200 2 0.800-2 1.400z" fill="#1b2a38"/>
</g>
</defs>
<use href="#slideart"/>
</svg>
</div>

<!-- ============ SCROLLBARS / NOTES / STATUS ============ -->
<div class="abs" style="left:1192.0px;top:105.0px;width:8.0px;height:484.0px;background:#f5f5f5"></div>
<svg style="left:1194.5px;top:108.5px" width="6" height="4" viewBox="0 0 6 4"><path d="M0.300 3.700L3 0.500L5.700 3.700z" fill="#666"/></svg>
<div class="abs" style="left:1195.5px;top:352.5px;width:4.5px;height:200.5px;background:#606060;border-radius:2.500px 0 0 2.500px"></div>
<svg style="left:1194.5px;top:560.0px" width="6" height="4" viewBox="0 0 6 4"><path d="M0.300 0.300L3 3.500L5.700 0.300z" fill="#666"/></svg>
<svg style="left:1194.5px;top:569.5px" width="6" height="7" viewBox="0 0 6 7"><path d="M0.300 3.300L3 0.300L5.700 3.300zM0.300 6.800L3 3.800L5.700 6.800z" fill="#666"/></svg>
<svg style="left:1194.5px;top:578.0px" width="6" height="7" viewBox="0 0 6 7"><path d="M0.300 0.300L3 3.300L5.700 0.300zM0.300 3.800L3 6.800L5.700 3.800z" fill="#666"/></svg>
<div class="abs" style="left:212.0px;top:588.7px;width:980.0px;height:10.0px;background:#f6f6f6"></div>
<svg style="left:215.5px;top:590.0px" width="4" height="6" viewBox="0 0 4 6"><path d="M3.700 0.300L0.500 3L3.700 5.700z" fill="#555"/></svg>
<div class="abs" style="left:224.5px;top:590.5px;width:958.0px;height:5.0px;background:#636363;border-radius:2.500px"></div>
<svg style="left:1186.0px;top:590.0px" width="4" height="6" viewBox="0 0 4 6"><path d="M0.300 0.300L3.500 3L0.300 5.700z" fill="#555"/></svg>
<div class="abs" style="left:212.0px;top:599.5px;width:988.0px;height:1.0px;background:#dadada"></div>
<div class="abs" style="left:0.0px;top:629.0px;width:1200.0px;height:17.5px;background:#f6f6f6"></div>
<div class="abs" style="left:0.0px;top:646.0px;width:1200.0px;height:1.0px;background:#d6d6d6"></div>
<svg style="left:47.5px;top:632.5px" width="8.5" height="9" viewBox="0 0 8.5 9"><path d="M0.500 1Q2.500 0.300 4.250 1.500Q6 0.300 8 1V7.500Q6 6.800 4.250 8Q2.500 6.800 0.500 7.500zM4.250 1.500V8" fill="none" stroke="#333" stroke-width="0.800"/></svg>
<svg style="left:67.0px;top:632.0px" width="9.5" height="10" viewBox="0 0 9.5 10"><circle cx="4" cy="1.500" r="1.100" fill="#333"/><path d="M0.500 3.500Q4 4.500 7.500 3.500M4 4V6.500M4 6.500L2 9.500M4 6.500L5.500 8" fill="none" stroke="#333" stroke-width="0.900"/><path d="M6 6.500L9 9.500M9 6.500L6 9.500" stroke="#333" stroke-width="0.800"/></svg>
<svg style="left:931.5px;top:632.5px" width="9" height="9" viewBox="0 0 9 9"><path d="M0 8.500h9M0 6.300h9M1.500 4.100h6M3.300 1.900L4.500 0.500L5.700 1.900" fill="none" stroke="#444" stroke-width="0.900"/></svg>
<div class="abs" style="left:974.0px;top:629.5px;width:24.5px;height:16.0px;background:#d2d2d2"></div>
<svg style="left:981.5px;top:633.0px" width="10" height="9" viewBox="0 0 10 9"><rect x="0.500" y="0.500" width="9" height="7.500" fill="none" stroke="#333" stroke-width="1"/><path d="M2.300 2.500h2M2.300 4.200h2M2.300 5.900h2" stroke="#333" stroke-width="0.800"/><rect x="5" y="2" width="3.500" height="4.500" fill="#333"/></svg>
<svg style="left:1007.0px;top:633.0px" width="9" height="9" viewBox="0 0 9 9"><rect x="0.500" y="0.500" width="3" height="3" fill="none" stroke="#444" stroke-width="0.900"/><rect x="5.500" y="0.500" width="3" height="3" fill="none" stroke="#444" stroke-width="0.900"/><rect x="0.500" y="5.500" width="3" height="3" fill="none" stroke="#444" stroke-width="0.900"/><rect x="5.500" y="5.500" width="3" height="3" fill="none" stroke="#444" stroke-width="0.900"/></svg>
<svg style="left:1032.5px;top:633.0px" width="8.5" height="9" viewBox="0 0 8.5 9"><path d="M0.500 0.800Q2.500 0.200 4.250 1.300Q6 0.200 8 0.800V7.500Q6 6.900 4.250 8Q2.500 6.900 0.500 7.500zM4.250 1.300V8" fill="#777" stroke="#444" stroke-width="0.800"/></svg>
<svg style="left:1058.0px;top:632.5px" width="9" height="10" viewBox="0 0 9 10"><path d="M0.300 0.700h8.400M1.200 0.700V5.500h6.600V0.700M4.500 5.500V8M2.800 9h3.400" fill="none" stroke="#444" stroke-width="0.900"/></svg>
<div class="abs" style="left:1077.5px;top:637.0px;width:4.5px;height:0.9px;background:#444"></div>
<div class="abs" style="left:1086.0px;top:637.0px;width:63.0px;height:0.9px;background:#666"></div>
<div class="abs" style="left:1113.8px;top:632.8px;width:2.4px;height:9.0px;background:#555"></div>
<div class="abs" style="left:1153.0px;top:637.0px;width:4.8px;height:0.9px;background:#444"></div>
<div class="abs" style="left:1155.0px;top:635.0px;width:0.9px;height:4.8px;background:#444"></div>
<svg style="left:1191.0px;top:633.0px" width="8" height="8" viewBox="0 0 8 8"><rect x="1.500" y="1.500" width="5" height="5" fill="none" stroke="#444" stroke-width="0.900"/><path d="M4 0v2M4 6v2M0 4h2M6 4h2" stroke="#444" stroke-width="0.900"/></svg>
<div class="abs" style="left:0.0px;top:647.0px;width:1200.0px;height:12.0px;background:#eef0f3"></div>
<svg style="left:4.5px;top:651.5px" width="17" height="8" viewBox="0 0 17 8"><rect x="0" y="0" width="7.500" height="8" fill="#1f8fe8"/><rect x="8.500" y="0" width="7.500" height="8" fill="#1f8fe8"/></svg>
<div class="abs" style="left:27.5px;top:650.5px;width:138.0px;height:14.0px;background:#fafafa;border:1px solid #d4d4d4;border-radius:7px"></div>
<svg style="left:34.0px;top:652.5px" width="9" height="7" viewBox="0 0 9 7"><circle cx="5" cy="5.500" r="4" fill="none" stroke="#333" stroke-width="1.100"/></svg>
<svg style="left:136.0px;top:651.0px" width="28" height="9" viewBox="0 0 28 9"><circle cx="8" cy="7" r="4" fill="#3aa0e8"/><circle cx="15" cy="6" r="3.500" fill="#e86aa0"/><circle cx="21" cy="7.500" r="3" fill="#6cc4f0"/><path d="M5 6L14 2L22 5" stroke="#2b7fc4" stroke-width="1.200" fill="none"/></svg>
<svg style="left:173.0px;top:654.0px" width="14" height="6" viewBox="0 0 14 6"><rect x="0.500" y="0.500" width="6" height="6" fill="#333"/><rect x="7.500" y="0.500" width="6" height="6" fill="#bdbdbd"/></svg>
<svg style="left:200.5px;top:652.0px" width="16" height="8" viewBox="0 0 16 8"><path d="M0.500 2Q0.500 1 1.500 1H6L7.500 2.500H14.500Q15.500 2.500 15.500 3.500V8H0.500z" fill="#f7c948"/><path d="M0.500 4.500H15.500V8H0.500z" fill="#f9d978"/></svg>
<svg style="left:228.0px;top:651.0px" width="17" height="9" viewBox="0 0 17 9"><circle cx="8.500" cy="9" r="8" fill="#e24a3b"/><path d="M0.500 9A8 8 0 0 1 4 3L8.500 9z" fill="#f2c037"/><circle cx="8.500" cy="9" r="3.800" fill="#fff"/><circle cx="8.500" cy="9" r="3" fill="#3f83f0"/></svg>
<svg style="left:256.0px;top:650.0px" width="18" height="10" viewBox="0 0 18 10"><rect x="1" y="5" width="9" height="6" rx="1" fill="#5059c9"/><circle cx="12.500" cy="4" r="4" fill="#23a455"/><path d="M10.500 4L12 5.500L14.500 2.800" fill="none" stroke="#fff" stroke-width="1.200"/></svg>
<svg style="left:284.0px;top:652.0px" width="17" height="8" viewBox="0 0 17 8"><rect x="5" y="0.500" width="11" height="8" fill="#2a8fe0"/><rect x="0.500" y="2.500" width="9" height="6" fill="#0f5fb5"/><rect x="7" y="1.500" width="3" height="3" fill="#7cc2f5"/><rect x="11" y="1.500" width="3" height="3" fill="#55aaf0"/></svg>
<div class="abs" style="left:309.5px;top:650.0px;width:23.0px;height:10.0px;background:#fbfbfb;border:1px solid #dcdcdc;border-radius:3px 3px 0 0"></div>
<svg style="left:313.0px;top:652.0px" width="16" height="8" viewBox="0 0 16 8"><circle cx="9" cy="8" r="7" fill="#e56a4c"/><rect x="1" y="4" width="8" height="6" rx="1" fill="#c43e1c"/></svg>
<svg style="left:340.0px;top:651.5px" width="16" height="8" viewBox="0 0 16 8"><path d="M1 1h2M5 1h2M9 1h1.500M1 1v2M1 5v2.500M10.500 1v2" stroke="#d9342b" stroke-width="1.400" fill="none"/><path d="M11 4l3 4" stroke="#888" stroke-width="1.200"/><circle cx="10" cy="7.500" r="1.500" fill="none" stroke="#3a7fd9" stroke-width="1"/></svg>
<svg style="left:1077.0px;top:654.5px" width="8" height="5" viewBox="0 0 8 5"><path d="M0.500 4.500L4 0.800L7.500 4.500" fill="none" stroke="#333" stroke-width="1"/></svg>
<svg style="left:1094.0px;top:654.0px" width="12" height="6" viewBox="0 0 12 6"><circle cx="6" cy="6" r="5" fill="#1a73d9"/></svg>
<svg style="left:1114.0px;top:653.5px" width="12" height="6" viewBox="0 0 12 6"><rect x="0.500" y="0.500" width="9" height="7" fill="none" stroke="#333" stroke-width="0.900"/><rect x="7" y="3" width="4" height="4" fill="#eef0f3" stroke="#333" stroke-width="0.800"/></svg>
<svg style="left:1129.0px;top:653.5px" width="12" height="6" viewBox="0 0 12 6"><path d="M0.500 3.500h2l2.500-2.500v8" fill="none" stroke="#333" stroke-width="0.900"/><path d="M6.500 2.500Q8 4.500 6.500 6.500M8.500 1Q11 4.500 8.500 8" fill="none" stroke="#333" stroke-width="0.800"/></svg>
<div class="t" style="left:219.0px;top:604.9px;font-size:9.8px;line-height:11.8px;color:#3d3d3d;font-weight:normal;transform-origin:0 50%;transform:scaleX(0.944);-webkit-text-stroke:0">Click to add notes</div>
<div class="t" style="left:-2.5px;top:632.2px;font-size:8px;line-height:9.6px;color:#333;font-weight:normal;transform-origin:0 50%;transform:scaleX(0.924)">Slide 1 of 1</div>
<div class="t" style="left:79.0px;top:632.2px;font-size:8px;line-height:9.6px;color:#222;font-weight:bold;transform-origin:0 50%;transform:scaleX(0.832);-webkit-text-stroke:0">Accessibility: Investigate</div>
<div class="t" style="left:942.5px;top:632.2px;font-size:8px;line-height:9.6px;color:#333;font-weight:normal;transform-origin:0 50%;transform:scaleX(0.909)">Notes</div>
<div class="t" style="left:1166.0px;top:632.4px;font-size:7.6px;line-height:9.1px;color:#333;font-weight:normal;transform-origin:0 50%;transform:scaleX(0.855)">90%</div>
<div class="t" style="left:50.0px;top:655.6px;font-size:8.6px;line-height:10.3px;color:#666;font-weight:normal;transform-origin:0 50%;transform:scaleX(0.991)">Search</div>
<div class="t" style="left:1173.5px;top:648.9px;font-size:7.6px;line-height:9.1px;color:#222;font-weight:normal;transform-origin:0 50%;transform:scaleX(0.868)">12:23</div>

</div></body></html>
